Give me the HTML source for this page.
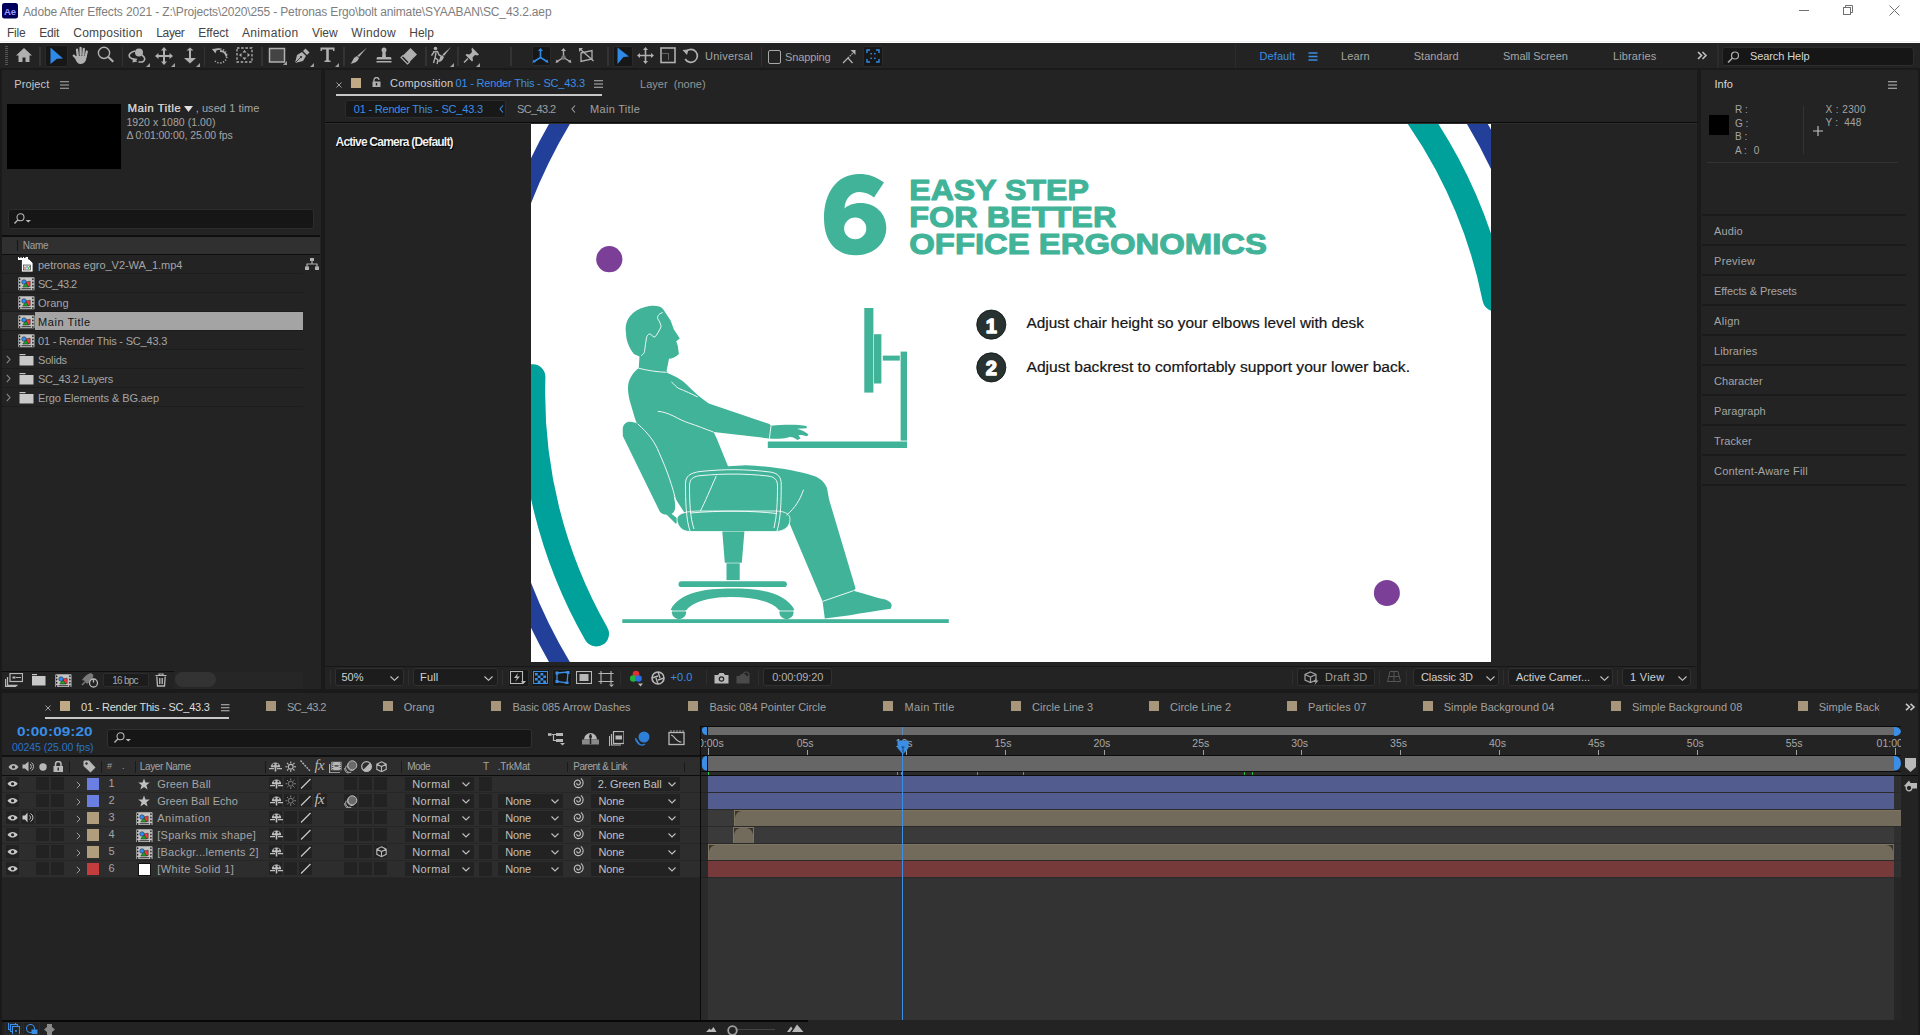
<!DOCTYPE html>
<html><head><meta charset="utf-8"><style>
html,body{margin:0;padding:0;width:1920px;height:1035px;overflow:hidden;background:#232323;}
body{position:relative;font-family:"Liberation Sans", sans-serif;}
div,span,svg{position:absolute;box-sizing:border-box;}
.t{white-space:pre;}
</style></head><body>
<div style="left:0px;top:0px;width:1920px;height:43px;background:#ffffff;"></div>
<div style="left:0px;top:41px;width:1920px;height:1px;background:#f0f0f0;"></div>
<svg style="position:absolute;left:2px;top:3px;" width="16" height="16" viewBox="0 0 16 16"><rect x="0" y="0" width="16" height="15.5" rx="2.5" fill="#00005b"/><text x="8" y="11.6" text-anchor="middle" font-family="Liberation Sans" font-weight="700" font-size="9.5" fill="#9999ff">Ae</text></svg>
<span class="t" style="left:23px;top:5.54px;font-size:12px;line-height:12px;color:#7e7e7e;font-weight:400;letter-spacing:-0.147px;">Adobe After Effects 2021 - Z:\Projects\2020\255 - Petronas Ergo\bolt animate\SYAABAN\SC_43.2.aep</span>
<span class="t" style="left:7px;top:26.54px;font-size:12px;line-height:12px;color:#444444;font-weight:400;letter-spacing:-0.246px;">File</span>
<span class="t" style="left:39.25px;top:26.54px;font-size:12px;line-height:12px;color:#444444;font-weight:400;letter-spacing:-0.193px;">Edit</span>
<span class="t" style="left:73.25px;top:26.54px;font-size:12px;line-height:12px;color:#444444;font-weight:400;letter-spacing:0.240px;">Composition</span>
<span class="t" style="left:156.25px;top:26.54px;font-size:12px;line-height:12px;color:#444444;font-weight:400;letter-spacing:-0.355px;">Layer</span>
<span class="t" style="left:198.25px;top:26.54px;font-size:12px;line-height:12px;color:#444444;font-weight:400;letter-spacing:-0.023px;">Effect</span>
<span class="t" style="left:242px;top:26.54px;font-size:12px;line-height:12px;color:#444444;font-weight:400;letter-spacing:0.342px;">Animation</span>
<span class="t" style="left:312px;top:26.54px;font-size:12px;line-height:12px;color:#444444;font-weight:400;letter-spacing:-0.065px;">View</span>
<span class="t" style="left:351.25px;top:26.54px;font-size:12px;line-height:12px;color:#444444;font-weight:400;letter-spacing:0.334px;">Window</span>
<span class="t" style="left:409.25px;top:26.54px;font-size:12px;line-height:12px;color:#444444;font-weight:400;letter-spacing:-0.027px;">Help</span>
<svg style="position:absolute;left:1795px;top:0px;" width="120" height="20" viewBox="0 0 120 20"><line x1="4" y1="10.5" x2="14" y2="10.5" stroke="#707070" stroke-width="1"/><rect x="48.5" y="7.5" width="7" height="7" fill="none" stroke="#707070"/><path d="M50.5 7.5 V5.5 H57.5 V12.5 H55.5" fill="none" stroke="#707070"/><path d="M94.5 5.5 L104.5 15.5 M104.5 5.5 L94.5 15.5" stroke="#707070" stroke-width="1"/></svg>
<div style="left:0px;top:43px;width:1920px;height:25px;background:#232323;"></div>
<div style="left:0px;top:68px;width:1920px;height:2px;background:#1a1a1a;"></div>
<svg style="position:absolute;left:5px;top:46px;" width="3" height="20" viewBox="0 0 3 20"><rect x="0" y="0" width="3" height="1" fill="#555"/><rect x="0" y="2" width="3" height="1" fill="#555"/><rect x="0" y="4" width="3" height="1" fill="#555"/><rect x="0" y="6" width="3" height="1" fill="#555"/><rect x="0" y="8" width="3" height="1" fill="#555"/><rect x="0" y="10" width="3" height="1" fill="#555"/><rect x="0" y="12" width="3" height="1" fill="#555"/><rect x="0" y="14" width="3" height="1" fill="#555"/><rect x="0" y="16" width="3" height="1" fill="#555"/><rect x="0" y="18" width="3" height="1" fill="#555"/></svg>
<svg style="position:absolute;left:15px;top:47px;" width="18" height="16" viewBox="0 0 18 16"><path d="M9 1 L17 8.5 H14.5 V15 H10.5 V10.5 H7.5 V15 H3.5 V8.5 H1 Z" fill="#b0b0b0"/></svg>
<div style="left:39px;top:47px;width:1.5px;height:19px;background:#333333;"></div>
<div style="left:44.5px;top:44.5px;width:23px;height:22px;background:#171717;border:1px solid #2a2a2a;border-radius:2px;"></div>
<svg style="position:absolute;left:50px;top:47px;" width="14" height="18" viewBox="0 0 14 18"><path d="M0.5 0.5 L13 11.5 L7 11.8 L0.5 17 Z" fill="#2e8ae6"/></svg>
<svg style="position:absolute;left:72px;top:46px;" width="18" height="19" viewBox="0 0 18 19"><g stroke="#b0b0b0" stroke-width="2.3" stroke-linecap="round" fill="none"><path d="M5.8 10 L5 3.6"/><path d="M8.6 9 L8.6 1.8"/><path d="M11.3 9 L11.8 2.8"/><path d="M13.6 10.5 L14.8 5.5"/><path d="M4.6 12.5 L1.8 9.6"/></g><path d="M4 10 H14.8 L14 14 C13 16.5 11 18 8.5 18 C6 18 4.5 16 3.5 13.5 Z" fill="#b0b0b0"/></svg>
<svg style="position:absolute;left:97px;top:46px;" width="18" height="18" viewBox="0 0 18 18"><circle cx="7" cy="6.9" r="5.6" fill="none" stroke="#b0b0b0" stroke-width="1.4"/><path d="M11 10.8 L16.3 15.8" stroke="#b0b0b0" stroke-width="2"/></svg>
<div style="left:121.5px;top:47px;width:1.5px;height:19px;background:#333333;"></div>
<svg style="position:absolute;left:128px;top:47px;" width="22" height="19" viewBox="0 0 22 19"><circle cx="11" cy="5.5" r="4" fill="#b0b0b0"/><path d="M7 4 C2 5 0 8 2 10.5 C4 13 8 12 9 12.5 M14 8 C17 10 18 13 14.5 15 L10.5 15" fill="none" stroke="#b0b0b0" stroke-width="1.6"/><path d="M5 11 L9.5 14.5 L4.5 15.5 Z" fill="#b0b0b0"/></svg>
<svg style="position:absolute;left:145.5px;top:62.5px;" width="4" height="4" viewBox="0 0 4 4"><path d="M4 0 V4 H0 Z" fill="#a0a0a0"/></svg>
<svg style="position:absolute;left:155px;top:47px;" width="18" height="18" viewBox="0 0 18 18"><path d="M9 0 L12 3.5 H10 V8 H14.5 V6 L18 9 L14.5 12 V10 H10 V14.5 H12 L9 18 L6 14.5 H8 V10 H3.5 V12 L0 9 L3.5 6 V8 H8 V3.5 H6 Z" fill="#b0b0b0"/></svg>
<svg style="position:absolute;left:171px;top:62.5px;" width="4" height="4" viewBox="0 0 4 4"><path d="M4 0 V4 H0 Z" fill="#a0a0a0"/></svg>
<svg style="position:absolute;left:182px;top:47px;" width="16" height="18" viewBox="0 0 16 18"><path d="M8 0.5 L11.5 3.5 H9 V11 H14 L8 16.5 L2 11 H7 V3.5 H4.5 Z" fill="#b0b0b0"/></svg>
<svg style="position:absolute;left:195.5px;top:62.5px;" width="4" height="4" viewBox="0 0 4 4"><path d="M4 0 V4 H0 Z" fill="#a0a0a0"/></svg>
<div style="left:203.5px;top:47px;width:1.5px;height:19px;background:#333333;"></div>
<svg style="position:absolute;left:211px;top:47px;" width="18" height="18" viewBox="0 0 18 18"><path d="M4 4 A7 7 0 1 1 4 14" fill="none" stroke="#b0b0b0" stroke-width="1.5" stroke-dasharray="1.2 1.6"/><path d="M9 4 A6.5 6.5 0 0 1 15.5 9.5" fill="none" stroke="#b0b0b0" stroke-width="1.8"/><path d="M1 2 L6 1.5 L4.5 6.5 Z" fill="#b0b0b0"/><path d="M3.3 3.5 A7 7 0 0 1 9 2.2" fill="none" stroke="#b0b0b0" stroke-width="1.8"/></svg>
<svg style="position:absolute;left:236px;top:47px;" width="18" height="18" viewBox="0 0 18 18"><rect x="1" y="1" width="15" height="14" fill="none" stroke="#b0b0b0" stroke-width="1.3" stroke-dasharray="2.5 1.7"/><path d="M8.5 3 L10.5 5.5 H6.5 Z M8.5 13 L10.5 10.5 H6.5 Z M3 8 L5.5 6 V10 Z M14 8 L11.5 6 V10 Z" fill="#b0b0b0"/></svg>
<div style="left:261px;top:47px;width:1.5px;height:19px;background:#333333;"></div>
<svg style="position:absolute;left:268px;top:47px;" width="20" height="19" viewBox="0 0 20 19"><rect x="1.5" y="1.5" width="15" height="13.5" fill="#444" stroke="#b0b0b0" stroke-width="1.5"/><path d="M19 14 V18 H15 Z" fill="#a0a0a0"/></svg>
<svg style="position:absolute;left:293px;top:47px;" width="18" height="18" viewBox="0 0 18 18"><path d="M2 16 L4 8 L9 5 L13 9 L10 14 Z" fill="#b0b0b0"/><path d="M10 4 L12.5 1.5 L16.5 5.5 L14 8 Z" fill="#b0b0b0"/><circle cx="8" cy="10" r="1.1" fill="#232323"/><path d="M2 16 L7.5 10.5" stroke="#232323" stroke-width="0.8"/></svg>
<svg style="position:absolute;left:310px;top:62.5px;" width="4" height="4" viewBox="0 0 4 4"><path d="M4 0 V4 H0 Z" fill="#a0a0a0"/></svg>
<svg style="position:absolute;left:320px;top:47px;" width="16" height="17" viewBox="0 0 16 17"><path d="M0.5 0.5 H14.5 V4 H13 V2.5 H8.8 V13.5 H10.5 V15 H4.5 V13.5 H6.2 V2.5 H2 V4 H0.5 Z" fill="#b0b0b0"/></svg>
<svg style="position:absolute;left:335px;top:62.5px;" width="4" height="4" viewBox="0 0 4 4"><path d="M4 0 V4 H0 Z" fill="#a0a0a0"/></svg>
<div style="left:343px;top:47px;width:1.5px;height:19px;background:#333333;"></div>
<svg style="position:absolute;left:350px;top:47px;" width="18" height="18" viewBox="0 0 18 18"><path d="M17 0.5 L9 10 L7.5 8.5 Z" fill="#b0b0b0"/><path d="M7 9 L9 11 C8 14 5 16.5 0.5 16.5 C2.5 15 3 12 4.5 10.5 Z" fill="#b0b0b0"/></svg>
<svg style="position:absolute;left:375px;top:47px;" width="18" height="18" viewBox="0 0 18 18"><circle cx="9" cy="3" r="2.5" fill="#b0b0b0"/><path d="M7.5 5 H10.5 L11 10 H15.5 C16.5 10 16.5 12.5 16.5 12.5 H1.5 C1.5 12.5 1.5 10 2.5 10 H7 Z" fill="#b0b0b0"/><rect x="1.5" y="14" width="15" height="1.5" fill="#b0b0b0"/></svg>
<svg style="position:absolute;left:400px;top:47px;" width="18" height="18" viewBox="0 0 18 18"><path d="M10.5 1 L17 7.5 L9.5 15 L3 8.5 Z" fill="#b0b0b0"/><path d="M3 8.5 L9.5 15 L7.5 17 L1 10.5 Z" fill="none" stroke="#b0b0b0" stroke-width="1.2"/></svg>
<div style="left:425px;top:47px;width:1.5px;height:19px;background:#333333;"></div>
<svg style="position:absolute;left:431px;top:46px;" width="21" height="20" viewBox="0 0 21 20"><circle cx="4.5" cy="2.5" r="1.8" fill="#b0b0b0"/><path d="M2 6 L6.5 5.5 L8 9 L10 10 M5 7 L4 12 L2.5 17 M4.5 12 L7 14 L6 18 M3 6 L0.5 9.5" fill="none" stroke="#b0b0b0" stroke-width="1.4"/><path d="M20 1 L13 10 L11.5 8.5 Z" fill="#b0b0b0"/><path d="M11 9 L13 11 C12 14 10 16 7 16 C8.5 14 9 12 9 11 Z" fill="#b0b0b0"/></svg>
<svg style="position:absolute;left:449.5px;top:62.5px;" width="4" height="4" viewBox="0 0 4 4"><path d="M4 0 V4 H0 Z" fill="#a0a0a0"/></svg>
<div style="left:457px;top:47px;width:1.5px;height:19px;background:#333333;"></div>
<svg style="position:absolute;left:463px;top:47px;" width="17" height="17" viewBox="0 0 17 17"><path d="M8 1 L15 8 L13.5 9 L11 8.5 L8.5 11 L9 14 L8 15 L1.5 8.5 L2.5 7.5 L5.5 8 L8 5.5 L7.5 3 Z" fill="#b0b0b0" transform="translate(1 -0.5)"/><path d="M5 11.5 L1 15.5" stroke="#b0b0b0" stroke-width="1.5"/></svg>
<svg style="position:absolute;left:476px;top:62.5px;" width="4" height="4" viewBox="0 0 4 4"><path d="M4 0 V4 H0 Z" fill="#a0a0a0"/></svg>
<div style="left:510px;top:47px;width:1.5px;height:19px;background:#333333;"></div>
<div style="left:531.5px;top:46px;width:19.5px;height:20px;background:#171717;border:1px solid #2a2a2a;border-radius:2px;"></div>
<svg style="position:absolute;left:532px;top:48px;" width="17" height="16" viewBox="0 0 17 16"><path d="M8.5 2 V9.5 L2 13.5 M8.5 9.5 L15 13.5" stroke="#2e8ae6" stroke-width="1.6" fill="none"/><path d="M8.5 0 L11 3 H6 Z M0.5 15 L1.5 11.5 L4 14 Z M16.5 15 L15.5 11.5 L13 14 Z" fill="#2e8ae6"/></svg>
<svg style="position:absolute;left:555px;top:48px;" width="17" height="16" viewBox="0 0 17 16"><path d="M8.5 2 V9.5 L2 13.5 M8.5 9.5 L15 13.5" stroke="#b0b0b0" stroke-width="1.4" fill="none"/><path d="M8.5 0 L11 3 H6 Z M0.5 15 L1.5 11.5 L4 14 Z M16.5 15 L15.5 11.5 L13 14 Z" fill="#b0b0b0"/><circle cx="8.5" cy="9.5" r="2.3" fill="#777"/></svg>
<svg style="position:absolute;left:579px;top:48px;" width="16" height="16" viewBox="0 0 16 16"><path d="M2 5 L13 2.5 V11 L2 13.5 Z" fill="none" stroke="#b0b0b0" stroke-width="1.3"/><path d="M1 1 L14.5 13" stroke="#b0b0b0" stroke-width="1.3"/><path d="M0 0 H4 L0 4 Z" fill="#b0b0b0"/></svg>
<div style="left:607px;top:47px;width:1.5px;height:19px;background:#333333;"></div>
<div style="left:612.5px;top:45.5px;width:20px;height:21px;background:#171717;border:1px solid #2a2a2a;border-radius:2px;"></div>
<svg style="position:absolute;left:617px;top:47px;" width="13" height="18" viewBox="0 0 13 18"><path d="M0.5 0.5 L12 9.5 L6.5 10 L0.5 17 Z" fill="#2e8ae6"/></svg>
<svg style="position:absolute;left:637px;top:47px;" width="17" height="17" viewBox="0 0 17 17"><path d="M8.5 0 L11 3 H9.3 V7.7 H14 V6 L17 8.5 L14 11 V9.3 H9.3 V14 H11 L8.5 17 L6 14 H7.7 V9.3 H3 V11 L0 8.5 L3 6 V7.7 H7.7 V3 H6 Z" fill="#b0b0b0"/></svg>
<svg style="position:absolute;left:660px;top:47px;" width="16" height="17" viewBox="0 0 16 17"><rect x="1" y="1" width="14" height="14.5" fill="none" stroke="#b0b0b0" stroke-width="1.6"/><path d="M2.5 6.5 H8.5 V13" fill="none" stroke="#b0b0b0" stroke-width="0.9" stroke-dasharray="1 1"/></svg>
<svg style="position:absolute;left:682px;top:47px;" width="18" height="18" viewBox="0 0 18 18"><path d="M4 4.5 A6.5 6.5 0 1 1 3.2 12" fill="none" stroke="#b0b0b0" stroke-width="1.7"/><path d="M0.5 3 L6.5 2.5 L5 8 Z" fill="#b0b0b0"/></svg>
<span class="t" style="left:705px;top:51.29px;font-size:11px;line-height:11px;color:#a5a5a5;font-weight:400;letter-spacing:0.219px;">Universal</span>
<div style="left:760.5px;top:47px;width:1.5px;height:19px;background:#333333;"></div>
<div style="left:768px;top:50px;width:13px;height:14px;background:transparent;border:1.6px solid #a8a8a8;border-radius:2px;"></div>
<span class="t" style="left:785px;top:51.69px;font-size:11px;line-height:11px;color:#a5a5a5;font-weight:400;letter-spacing:-0.127px;">Snapping</span>
<svg style="position:absolute;left:842px;top:49px;" width="14" height="15" viewBox="0 0 14 15"><path d="M1 14 L6 9 L10.5 14" fill="none" stroke="#b0b0b0" stroke-width="1.3"/><path d="M6 9 L12 3" stroke="#b0b0b0" stroke-width="1.2" stroke-dasharray="1.5 1"/><path d="M13.5 1 V6 L8.5 1 Z" fill="#b0b0b0"/></svg>
<div style="left:862.5px;top:45.5px;width:20.5px;height:21.5px;background:#171717;border:1px solid #2a2a2a;border-radius:2px;"></div>
<svg style="position:absolute;left:866px;top:49px;" width="14" height="14" viewBox="0 0 14 14"><path d="M1 4 V1 H4 M10 1 H13 V4 M13 10 V13 H10 M4 13 H1 V10" fill="none" stroke="#2e8ae6" stroke-width="1.4"/><path d="M5 5.5 V4.5 H6 M8 4.5 H9 V5.5 M9 8.5 V9.5 H8 M6 9.5 H5 V8.5" fill="none" stroke="#2e8ae6" stroke-width="1.2"/></svg>
<div style="left:1235px;top:44px;width:1px;height:24px;background:#2c2c2c;"></div>
<span class="t" style="left:1259.4px;top:51.29px;font-size:11px;line-height:11px;color:#3a8ee6;font-weight:400;letter-spacing:0.124px;">Default</span>
<svg style="position:absolute;left:1308px;top:52px;" width="10" height="9" viewBox="0 0 10 9"><path d="M0.5 1 H9.5 M0.5 4.5 H9.5 M0.5 8 H9.5" stroke="#3a8ee6" stroke-width="1.3"/></svg>
<span class="t" style="left:1341px;top:51.29px;font-size:11px;line-height:11px;color:#a5a5a5;font-weight:400;letter-spacing:0.116px;">Learn</span>
<span class="t" style="left:1413.75px;top:51.29px;font-size:11px;line-height:11px;color:#a5a5a5;font-weight:400;letter-spacing:0.029px;">Standard</span>
<span class="t" style="left:1503px;top:51.29px;font-size:11px;line-height:11px;color:#a5a5a5;font-weight:400;letter-spacing:-0.052px;">Small Screen</span>
<span class="t" style="left:1613px;top:51.29px;font-size:11px;line-height:11px;color:#a5a5a5;font-weight:400;letter-spacing:0.127px;">Libraries</span>
<svg style="position:absolute;left:1697px;top:51px;" width="11" height="9" viewBox="0 0 11 9"><path d="M1 1 L4.5 4.5 L1 8 M5.5 1 L9 4.5 L5.5 8" fill="none" stroke="#c0c0c0" stroke-width="1.6"/></svg>
<div style="left:1717px;top:44px;width:1.5px;height:24px;background:#2c2c2c;"></div>
<div style="left:1722px;top:47px;width:192px;height:18.5px;background:#161616;border:1px solid #2c2c2c;border-radius:3px;"></div>
<svg style="position:absolute;left:1727px;top:51px;" width="13" height="12" viewBox="0 0 13 12"><circle cx="8" cy="4.5" r="3.5" fill="none" stroke="#b0b0b0" stroke-width="1.2"/><path d="M5.5 7 L1 11.5" stroke="#b0b0b0" stroke-width="1.5"/></svg>
<span class="t" style="left:1750px;top:51.39px;font-size:11px;line-height:11px;color:#d6d6d6;font-weight:400;letter-spacing:-0.093px;">Search Help</span>
<div style="left:0px;top:70px;width:1920px;height:623px;background:#1a1a1a;"></div>
<div style="left:2px;top:70px;width:319px;height:619px;background:#232323;"></div>
<div style="left:325px;top:70px;width:1372px;height:619px;background:#232323;"></div>
<div style="left:1701px;top:70px;width:217px;height:619px;background:#232323;"></div>
<div style="left:0px;top:693px;width:1920px;height:342px;background:#1a1a1a;"></div>
<div style="left:2px;top:693px;width:1916px;height:342px;background:#232323;"></div>
<span class="t" style="left:14.3px;top:78.59px;font-size:11px;line-height:11px;color:#c8c8c8;font-weight:400;letter-spacing:0.127px;">Project</span>
<svg style="position:absolute;left:60px;top:81px;" width="9" height="8" viewBox="0 0 9 8"><path d="M0 0.75 H9 M0 4 H9 M0 7.25 H9" stroke="#b0b0b0" stroke-width="1.2"/></svg>
<div style="left:7px;top:104px;width:114px;height:65px;background:#000000;"></div>
<span class="t" style="left:127.5px;top:103.03px;font-size:11.3px;line-height:11.3px;color:#cdcdcd;font-weight:400;text-shadow:0.3px 0 0 #cdcdcd;letter-spacing:0.527px;">Main Title</span>
<svg style="position:absolute;left:184px;top:106px;" width="9" height="6" viewBox="0 0 9 6"><path d="M0 0 H9 L4.5 6 Z" fill="#e0e0e0"/></svg>
<span class="t" style="left:195.7px;top:103.29px;font-size:11px;line-height:11px;color:#a5a5a5;font-weight:400;letter-spacing:0.060px;">, used 1 time</span>
<span class="t" style="left:126.4px;top:116.81px;font-size:10.5px;line-height:10.5px;color:#a5a5a5;font-weight:400;letter-spacing:0.050px;">1920 x 1080 (1.00)</span>
<span class="t" style="left:126.4px;top:129.81px;font-size:10.5px;line-height:10.5px;color:#a5a5a5;font-weight:400;letter-spacing:-0.073px;">Δ 0:01:00:00, 25.00 fps</span>
<div style="left:7.7px;top:209.3px;width:306.5px;height:19.5px;background:#161616;border:1px solid #2c2c2c;border-radius:3px;"></div>
<svg style="position:absolute;left:14px;top:213px;" width="18" height="12" viewBox="0 0 18 12"><circle cx="6.5" cy="4.3" r="3.5" fill="none" stroke="#b8b8b8" stroke-width="1.1"/><path d="M4 6.8 L0.5 10.5" stroke="#b8b8b8" stroke-width="1.3"/><path d="M11.5 7 H17 L14.25 9.5 Z" fill="#b8b8b8"/></svg>
<div style="left:2px;top:235px;width:318px;height:1.5px;background:#0e0e0e;"></div>
<div style="left:2px;top:236.5px;width:318px;height:17.5px;background:#303030;"></div>
<div style="left:17px;top:240px;width:1px;height:11px;background:#151515;"></div>
<span class="t" style="left:22.8px;top:240.53px;font-size:10px;line-height:10px;color:#a0a0a0;font-weight:400;letter-spacing:-0.292px;">Name</span>
<div style="left:2px;top:254px;width:318px;height:1.2px;background:#0e0e0e;"></div>
<div style="left:2px;top:273px;width:301px;height:1px;background:#1c1c1c;"></div>
<svg style="position:absolute;left:18px;top:256px;" width="17" height="17" viewBox="0 0 17 17"><path d="M3.5 3 H11 L15 7 V16 H3.5 Z" fill="#ffffff" stroke="#222" stroke-width="0.8"/><rect x="0" y="1" width="10" height="3" fill="#fff"/><path d="M1 1.5 h1.5 M3.5 1.5 h1.5 M6 1.5 h1.5" stroke="#222" stroke-width="1"/><rect x="5.5" y="9" width="7" height="5" fill="#ddd" stroke="#222" stroke-width="0.6"/><circle cx="7" cy="12" r="0.8" fill="#e03030"/><circle cx="9" cy="11" r="0.8" fill="#2b7de0"/><path d="M10 13 L12 10" stroke="#24b43c"/></svg>
<span class="t" style="left:38px;top:259.69px;font-size:11px;line-height:11px;color:#a5a5a5;font-weight:400;letter-spacing:-0.030px;">petronas egro_V2-WA_1.mp4</span>
<div style="left:2px;top:292px;width:301px;height:1px;background:#1c1c1c;"></div>
<svg style="position:absolute;left:17.5px;top:277px;" width="17" height="13.5" viewBox="0 0 17 13.5"><rect x="0.3" y="0.3" width="16.2" height="13" rx="0.8" fill="#c4c4c4"/><ellipse cx="1.7" cy="2.2" rx="0.7" ry="1" fill="#111"/><ellipse cx="14.9" cy="2.2" rx="0.7" ry="1" fill="#111"/><ellipse cx="1.7" cy="5.5" rx="0.7" ry="1" fill="#111"/><ellipse cx="14.9" cy="5.5" rx="0.7" ry="1" fill="#111"/><ellipse cx="1.7" cy="8.8" rx="0.7" ry="1" fill="#111"/><ellipse cx="14.9" cy="8.8" rx="0.7" ry="1" fill="#111"/><ellipse cx="1.7" cy="12.099999999999998" rx="0.7" ry="1" fill="#111"/><ellipse cx="14.9" cy="12.099999999999998" rx="0.7" ry="1" fill="#111"/><rect x="3.5" y="11.3" width="9.6" height="0.9" fill="#222"/><path d="M7.5 5 L12.2 4.2 L12.2 9.5 L9 9.5 Z" fill="#f03a3a" stroke="#222" stroke-width="0.5"/><path d="M4.8 10 L7.8 5.8 L10.8 10 Z" fill="#16a820" stroke="#222" stroke-width="0.5"/><circle cx="6" cy="5" r="2.3" fill="#2f8cf0" stroke="#222" stroke-width="0.5"/></svg>
<span class="t" style="left:38px;top:278.69px;font-size:11px;line-height:11px;color:#a5a5a5;font-weight:400;letter-spacing:-0.601px;">SC_43.2</span>
<div style="left:2px;top:311px;width:301px;height:1px;background:#1c1c1c;"></div>
<svg style="position:absolute;left:17.5px;top:296px;" width="17" height="13.5" viewBox="0 0 17 13.5"><rect x="0.3" y="0.3" width="16.2" height="13" rx="0.8" fill="#c4c4c4"/><ellipse cx="1.7" cy="2.2" rx="0.7" ry="1" fill="#111"/><ellipse cx="14.9" cy="2.2" rx="0.7" ry="1" fill="#111"/><ellipse cx="1.7" cy="5.5" rx="0.7" ry="1" fill="#111"/><ellipse cx="14.9" cy="5.5" rx="0.7" ry="1" fill="#111"/><ellipse cx="1.7" cy="8.8" rx="0.7" ry="1" fill="#111"/><ellipse cx="14.9" cy="8.8" rx="0.7" ry="1" fill="#111"/><ellipse cx="1.7" cy="12.099999999999998" rx="0.7" ry="1" fill="#111"/><ellipse cx="14.9" cy="12.099999999999998" rx="0.7" ry="1" fill="#111"/><rect x="3.5" y="11.3" width="9.6" height="0.9" fill="#222"/><path d="M7.5 5 L12.2 4.2 L12.2 9.5 L9 9.5 Z" fill="#f03a3a" stroke="#222" stroke-width="0.5"/><path d="M4.8 10 L7.8 5.8 L10.8 10 Z" fill="#16a820" stroke="#222" stroke-width="0.5"/><circle cx="6" cy="5" r="2.3" fill="#2f8cf0" stroke="#222" stroke-width="0.5"/></svg>
<span class="t" style="left:38px;top:297.69px;font-size:11px;line-height:11px;color:#a5a5a5;font-weight:400;letter-spacing:-0.018px;">Orang</span>
<div style="left:2px;top:330px;width:301px;height:1px;background:#1c1c1c;"></div>
<div style="left:2px;top:312px;width:33px;height:18px;background:#2b2b2b;"></div>
<div style="left:35px;top:312px;width:268px;height:18px;background:#a4a4a4;"></div>
<svg style="position:absolute;left:17.5px;top:315px;" width="17" height="13.5" viewBox="0 0 17 13.5"><rect x="0.3" y="0.3" width="16.2" height="13" rx="0.8" fill="#c4c4c4"/><ellipse cx="1.7" cy="2.2" rx="0.7" ry="1" fill="#111"/><ellipse cx="14.9" cy="2.2" rx="0.7" ry="1" fill="#111"/><ellipse cx="1.7" cy="5.5" rx="0.7" ry="1" fill="#111"/><ellipse cx="14.9" cy="5.5" rx="0.7" ry="1" fill="#111"/><ellipse cx="1.7" cy="8.8" rx="0.7" ry="1" fill="#111"/><ellipse cx="14.9" cy="8.8" rx="0.7" ry="1" fill="#111"/><ellipse cx="1.7" cy="12.099999999999998" rx="0.7" ry="1" fill="#111"/><ellipse cx="14.9" cy="12.099999999999998" rx="0.7" ry="1" fill="#111"/><rect x="3.5" y="11.3" width="9.6" height="0.9" fill="#222"/><path d="M7.5 5 L12.2 4.2 L12.2 9.5 L9 9.5 Z" fill="#f03a3a" stroke="#222" stroke-width="0.5"/><path d="M4.8 10 L7.8 5.8 L10.8 10 Z" fill="#16a820" stroke="#222" stroke-width="0.5"/><circle cx="6" cy="5" r="2.3" fill="#2f8cf0" stroke="#222" stroke-width="0.5"/></svg>
<span class="t" style="left:38px;top:316.69px;font-size:11px;line-height:11px;color:#141414;font-weight:400;letter-spacing:0.570px;">Main Title</span>
<div style="left:2px;top:349px;width:301px;height:1px;background:#1c1c1c;"></div>
<svg style="position:absolute;left:17.5px;top:334px;" width="17" height="13.5" viewBox="0 0 17 13.5"><rect x="0.3" y="0.3" width="16.2" height="13" rx="0.8" fill="#c4c4c4"/><ellipse cx="1.7" cy="2.2" rx="0.7" ry="1" fill="#111"/><ellipse cx="14.9" cy="2.2" rx="0.7" ry="1" fill="#111"/><ellipse cx="1.7" cy="5.5" rx="0.7" ry="1" fill="#111"/><ellipse cx="14.9" cy="5.5" rx="0.7" ry="1" fill="#111"/><ellipse cx="1.7" cy="8.8" rx="0.7" ry="1" fill="#111"/><ellipse cx="14.9" cy="8.8" rx="0.7" ry="1" fill="#111"/><ellipse cx="1.7" cy="12.099999999999998" rx="0.7" ry="1" fill="#111"/><ellipse cx="14.9" cy="12.099999999999998" rx="0.7" ry="1" fill="#111"/><rect x="3.5" y="11.3" width="9.6" height="0.9" fill="#222"/><path d="M7.5 5 L12.2 4.2 L12.2 9.5 L9 9.5 Z" fill="#f03a3a" stroke="#222" stroke-width="0.5"/><path d="M4.8 10 L7.8 5.8 L10.8 10 Z" fill="#16a820" stroke="#222" stroke-width="0.5"/><circle cx="6" cy="5" r="2.3" fill="#2f8cf0" stroke="#222" stroke-width="0.5"/></svg>
<span class="t" style="left:38px;top:335.69px;font-size:11px;line-height:11px;color:#a5a5a5;font-weight:400;letter-spacing:-0.201px;">01 - Render This - SC_43.3</span>
<div style="left:2px;top:368px;width:301px;height:1px;background:#1c1c1c;"></div>
<svg style="position:absolute;left:18.5px;top:353.5px;" width="15" height="12" viewBox="0 0 15 12"><rect x="0.5" y="0" width="6" height="1.2" fill="#c8c8c8"/><rect x="0.5" y="2" width="14" height="9.5" fill="#c8c8c8"/></svg>
<svg style="position:absolute;left:6px;top:355px;" width="5" height="9" viewBox="0 0 5 9"><path d="M0.8 0.8 L4 4.5 L0.8 8.2" fill="none" stroke="#8a8a8a" stroke-width="1.1"/></svg>
<span class="t" style="left:38px;top:354.69px;font-size:11px;line-height:11px;color:#a5a5a5;font-weight:400;letter-spacing:-0.172px;">Solids</span>
<div style="left:2px;top:387px;width:301px;height:1px;background:#1c1c1c;"></div>
<svg style="position:absolute;left:18.5px;top:372.5px;" width="15" height="12" viewBox="0 0 15 12"><rect x="0.5" y="0" width="6" height="1.2" fill="#c8c8c8"/><rect x="0.5" y="2" width="14" height="9.5" fill="#c8c8c8"/></svg>
<svg style="position:absolute;left:6px;top:374px;" width="5" height="9" viewBox="0 0 5 9"><path d="M0.8 0.8 L4 4.5 L0.8 8.2" fill="none" stroke="#8a8a8a" stroke-width="1.1"/></svg>
<span class="t" style="left:38px;top:373.69px;font-size:11px;line-height:11px;color:#a5a5a5;font-weight:400;letter-spacing:-0.283px;">SC_43.2 Layers</span>
<div style="left:2px;top:406px;width:301px;height:1px;background:#1c1c1c;"></div>
<svg style="position:absolute;left:18.5px;top:391.5px;" width="15" height="12" viewBox="0 0 15 12"><rect x="0.5" y="0" width="6" height="1.2" fill="#c8c8c8"/><rect x="0.5" y="2" width="14" height="9.5" fill="#c8c8c8"/></svg>
<svg style="position:absolute;left:6px;top:393px;" width="5" height="9" viewBox="0 0 5 9"><path d="M0.8 0.8 L4 4.5 L0.8 8.2" fill="none" stroke="#8a8a8a" stroke-width="1.1"/></svg>
<span class="t" style="left:38px;top:392.69px;font-size:11px;line-height:11px;color:#a5a5a5;font-weight:400;letter-spacing:-0.090px;">Ergo Elements &amp; BG.aep</span>
<svg style="position:absolute;left:304.5px;top:258px;" width="14" height="12" viewBox="0 0 14 12"><rect x="5" y="0" width="4" height="3" fill="#b0b0b0"/><path d="M7 3 V6 M2 9 V6 H12 V9" fill="none" stroke="#b0b0b0" stroke-width="1.2"/><rect x="0" y="8.5" width="4" height="3.5" fill="#b0b0b0"/><rect x="10" y="8.5" width="4" height="3.5" fill="#b0b0b0"/></svg>
<div style="left:174px;top:672px;width:129px;height:17px;background:#262626;"></div>
<div style="left:2px;top:670.6px;width:172px;height:1.4px;background:#0e0e0e;"></div>
<svg style="position:absolute;left:4.5px;top:673px;" width="18" height="14" viewBox="0 0 18 14"><rect x="5" y="0.5" width="12.5" height="8" fill="none" stroke="#b8b8b8" stroke-width="1.2"/><rect x="7.5" y="3.5" width="3" height="2" fill="#b8b8b8"/><rect x="11" y="4" width="5" height="1" fill="#b8b8b8"/><path d="M2.5 4 V12.5 H12.5 M0.5 6 V13.5 H11" fill="none" stroke="#b8b8b8" stroke-width="1.3"/></svg>
<svg style="position:absolute;left:31.5px;top:674px;" width="14" height="12" viewBox="0 0 14 12"><rect x="0" y="0" width="5" height="1.2" fill="#c8c8c8"/><rect x="0" y="2" width="13.5" height="9.5" fill="#c8c8c8"/></svg>
<svg style="position:absolute;left:54.8px;top:673.5px;" width="17" height="13.5" viewBox="0 0 17 13.5"><rect x="0.3" y="0.3" width="16.2" height="13" rx="0.8" fill="#c4c4c4"/><ellipse cx="1.7" cy="2.2" rx="0.7" ry="1" fill="#111"/><ellipse cx="14.9" cy="2.2" rx="0.7" ry="1" fill="#111"/><ellipse cx="1.7" cy="5.5" rx="0.7" ry="1" fill="#111"/><ellipse cx="14.9" cy="5.5" rx="0.7" ry="1" fill="#111"/><ellipse cx="1.7" cy="8.8" rx="0.7" ry="1" fill="#111"/><ellipse cx="14.9" cy="8.8" rx="0.7" ry="1" fill="#111"/><ellipse cx="1.7" cy="12.099999999999998" rx="0.7" ry="1" fill="#111"/><ellipse cx="14.9" cy="12.099999999999998" rx="0.7" ry="1" fill="#111"/><rect x="3.5" y="11.3" width="9.6" height="0.9" fill="#222"/><path d="M7.5 5 L12.2 4.2 L12.2 9.5 L9 9.5 Z" fill="#f03a3a" stroke="#222" stroke-width="0.5"/><path d="M4.8 10 L7.8 5.8 L10.8 10 Z" fill="#16a820" stroke="#222" stroke-width="0.5"/><circle cx="6" cy="5" r="2.3" fill="#2f8cf0" stroke="#222" stroke-width="0.5"/></svg>
<svg style="position:absolute;left:80.8px;top:673px;" width="18" height="15" viewBox="0 0 18 15"><path d="M10 0 C6 1 3 4 1 7 L4 8 L6 11 C9 9 12 6 12.5 2 Z" fill="#7a7a7a"/><path d="M1 12 L5 8" stroke="#7a7a7a" stroke-width="1.5"/><circle cx="12.5" cy="10" r="4" fill="none" stroke="#b8b8b8" stroke-width="1.3"/><path d="M12.5 5.5 V9.5" stroke="#b8b8b8" stroke-width="1.4"/></svg>
<div style="left:103px;top:672.7px;width:45.5px;height:14.5px;background:#1c1c1c;border:1px solid #2c2c2c;border-radius:2px;"></div>
<span class="t" style="left:112.3px;top:675.83px;font-size:10px;line-height:10px;color:#a5a5a5;font-weight:400;letter-spacing:-0.745px;">16 bpc</span>
<svg style="position:absolute;left:154.5px;top:673px;" width="12" height="14" viewBox="0 0 12 14"><path d="M0.5 2.5 H11.5 M4 2.5 V1 H8 V2.5" fill="none" stroke="#b8b8b8" stroke-width="1.2"/><path d="M1.8 3.5 L2.5 13 H9.5 L10.2 3.5" fill="none" stroke="#b8b8b8" stroke-width="1.3"/><path d="M4.5 5 V11 M6 5 V11 M7.5 5 V11" stroke="#b8b8b8" stroke-width="0.9"/></svg>
<div style="left:174.7px;top:671.8px;width:41.3px;height:15.2px;background:#333333;border-radius:8px;"></div>
<svg style="position:absolute;left:335.5px;top:81.5px;" width="6" height="6" viewBox="0 0 6 6"><path d="M0.5 0.5 L5.5 5.5 M5.5 0.5 L0.5 5.5" stroke="#a0a0a0" stroke-width="1"/></svg>
<div style="left:350.8px;top:78px;width:10.2px;height:10px;background:#c0aa85;"></div>
<svg style="position:absolute;left:371.5px;top:77px;" width="9" height="10" viewBox="0 0 9 10"><path d="M2 5 V3 A2.5 2.5 0 0 1 7 3" fill="none" stroke="#b0b0b0" stroke-width="1.3"/><rect x="0.5" y="4.5" width="8" height="5.5" fill="#b0b0b0"/><rect x="3.8" y="6" width="1.4" height="2.5" fill="#232323"/></svg>
<span class="t" style="left:390px;top:78.19px;font-size:11px;line-height:11px;color:#d0d0d0;font-weight:400;letter-spacing:0.196px;">Composition</span>
<span class="t" style="left:455.5px;top:78.19px;font-size:11px;line-height:11px;color:#3a8ee6;font-weight:400;letter-spacing:-0.189px;">01 - Render This - SC_43.3</span>
<svg style="position:absolute;left:593.5px;top:80px;" width="9" height="8" viewBox="0 0 9 8"><path d="M0 0.75 H9 M0 4 H9 M0 7.25 H9" stroke="#b8b8b8" stroke-width="1.2"/></svg>
<div style="left:335.8px;top:94px;width:266.5px;height:2.2px;background:#c8c8c8;"></div>
<span class="t" style="left:640px;top:78.69px;font-size:11px;line-height:11px;color:#959595;font-weight:400;letter-spacing:0.014px;">Layer  (none)</span>
<div style="left:345px;top:100.4px;width:161.3px;height:17.2px;background:#181818;border:1px solid #2c2c2c;border-radius:3px;"></div>
<span class="t" style="left:353.75px;top:103.69px;font-size:11px;line-height:11px;color:#3a8ee6;font-weight:400;letter-spacing:-0.201px;">01 - Render This - SC_43.3</span>
<svg style="position:absolute;left:499px;top:104.5px;" width="5" height="8" viewBox="0 0 5 8"><path d="M4 0.5 L1 4 L4 7.5" fill="none" stroke="#3a8ee6" stroke-width="1.1"/></svg>
<span class="t" style="left:517px;top:103.69px;font-size:11px;line-height:11px;color:#a0a0a0;font-weight:400;letter-spacing:-0.601px;">SC_43.2</span>
<svg style="position:absolute;left:571px;top:104.5px;" width="5" height="8" viewBox="0 0 5 8"><path d="M4 0.5 L1 4 L4 7.5" fill="none" stroke="#a0a0a0" stroke-width="1.1"/></svg>
<span class="t" style="left:590px;top:103.69px;font-size:11px;line-height:11px;color:#a0a0a0;font-weight:400;letter-spacing:0.308px;">Main Title</span>
<div style="left:325px;top:121.7px;width:1372px;height:1.6px;background:#0a0a0a;"></div>
<div style="left:325px;top:123.3px;width:1372px;height:0.8px;background:#2e2e2e;"></div>
<span class="t" style="left:335.5px;top:136.24px;font-size:12px;line-height:12px;color:#f0f0f0;font-weight:700;text-shadow:1px 1px 0 #000,-0.5px -0.5px 0 #000;letter-spacing:-0.785px;">Active Camera (Default)</span>
<div style="left:531px;top:124px;width:960px;height:538px;background:#ffffff;overflow:hidden;"></div>
<svg style="position:absolute;left:531px;top:124px;" width="960" height="538" viewBox="531 124 960 538"><path d="M582.61 698.14 A532 532 0 0 1 582.61 87.86" fill="none" stroke="#22409a" stroke-width="18"/><path d="M1425.94 51.04 A532 532 0 0 1 1542.32 300.62" fill="none" stroke="#22409a" stroke-width="18"/><path d="M596.25 633.79 A486 486 0 0 1 532.67 376.89" fill="none" stroke="#00a19a" stroke-width="25.5" stroke-linecap="round"/><path d="M1362.05 49.35 A486 486 0 0 1 1495.14 298.60" fill="none" stroke="#00a19a" stroke-width="25.5" stroke-linecap="round"/><circle cx="609.3" cy="259.2" r="13.1" fill="#7b3f98"/><circle cx="1386.9" cy="593" r="13" fill="#7b3f98"/><path fill-rule="evenodd" fill="#41b398" d="M884 182.5 C876 176.5 868 174 859.5 174 C836 174 824 194 824 218 C824 243 837 255.2 856 255.2 C874 255.2 886.3 243 886.3 228 C886.3 213 875 203 860.4 203 C853 203 848 205.5 844.5 208.4 C845 199 851 192.1 859.5 192.1 C865 192.1 870 194.5 874 197.5 Z M855.2 217.5 A11.1 10.9 0 1 0 855.2 239.3 A11.1 10.9 0 1 0 855.2 217.5 Z"/><text x="909.3" y="200.4" font-family="Liberation Sans" font-weight="700" font-size="29" fill="#41b398" stroke="#41b398" stroke-width="1.05" stroke-linejoin="round" textLength="179.5" lengthAdjust="spacingAndGlyphs">EASY STEP</text><text x="909.3" y="227.4" font-family="Liberation Sans" font-weight="700" font-size="29" fill="#41b398" stroke="#41b398" stroke-width="1.05" stroke-linejoin="round" textLength="207" lengthAdjust="spacingAndGlyphs">FOR BETTER</text><text x="909.3" y="254" font-family="Liberation Sans" font-weight="700" font-size="29" fill="#41b398" stroke="#41b398" stroke-width="1.05" stroke-linejoin="round" textLength="357.6" lengthAdjust="spacingAndGlyphs">OFFICE ERGONOMICS</text><circle cx="991.3" cy="324.6" r="14.6" fill="#283230" stroke="#0e1412" stroke-width="0.8"/><text x="991.3" y="332.6" text-anchor="middle" font-family="Liberation Sans" font-weight="700" font-size="20" fill="#ffffff" stroke="#ffffff" stroke-width="1.4" stroke-linejoin="round">1</text><circle cx="991.3" cy="367.4" r="14.6" fill="#283230" stroke="#0e1412" stroke-width="0.8"/><text x="991.3" y="375.4" text-anchor="middle" font-family="Liberation Sans" font-weight="700" font-size="20" fill="#ffffff" stroke="#ffffff" stroke-width="1.4" stroke-linejoin="round">2</text><text x="1026.5" y="328.4" font-family="Liberation Sans" font-size="14" fill="#151515" stroke="#151515" stroke-width="0.2" textLength="337.5" lengthAdjust="spacingAndGlyphs">Adjust chair height so your elbows level with desk</text><text x="1026.5" y="372.4" font-family="Liberation Sans" font-size="14" fill="#151515" stroke="#151515" stroke-width="0.2" textLength="383.5" lengthAdjust="spacingAndGlyphs">Adjust backrest to comfortably support your lower back.</text><g fill="#41b398"><rect x="864.3" y="308" width="9.1" height="84.6"/><rect x="874" y="334.2" width="7.4" height="49.3"/><rect x="882.8" y="355.6" width="17" height="5"/><rect x="900.6" y="351.6" width="6.4" height="89"/><rect x="767.8" y="441.5" width="139.2" height="6.5"/><rect x="622.3" y="619.2" width="326.5" height="3.8"/></g><path fill="#41b398" d="M622.8 431.3 C622 424 627 421 632 422 C636 422.5 638 423.5 639 425 C652 440 668 470 674 497 C676 507 676 513 670 514.5 C665 515.5 662 514 660 512 L622.8 436 Z"/><path fill="#41b398" d="M664 512 L668 511 L678 519 L676 524 Z"/><path fill="#41b398" d="M626 333 C624 322 630 311 645 307 C652 305 660 305 663 309 L670.6 320.5 L673.8 329.3 L679.8 338.4 L676.2 341.2 L677.8 346 L678.9 354 C676 357 672 358.8 669 358.8 L666.6 370.7 L667.4 373 C677 377 684 381 688 386 C695 393 702 399 708.8 403.4 L769.4 424.1 L771 425.7 C785 424.5 798 424.5 806.5 426 L806.8 428.2 L797 428.8 C801 430 806 432 808.5 434.5 L807 436.2 C803 435.2 800.5 434.8 798.5 435.2 L800.5 438.6 L797.5 440 C794 437.5 791.5 436.5 789 437.2 C783 439 776 439 769.4 438.5 L713.6 432 L716.3 437.6 L728 466.3 L746 465.3 C770 466 800 471 814 476 C820 478 824.8 482.3 827 488 L829 499.3 L855.6 588.6 L853.5 590.7 C865 594 878 598 884.3 599.2 C889 600.5 891.7 603 891.7 605.6 L890.7 608.8 C877 611 862 613 850 615.2 L824.8 618.4 L822.6 601.4 L786.5 516.3 L700 520 L684 512 C660 475 640 440 631 405 C628 395 627 387 629 381 C632 374 636 370 638.7 368.3 L639.5 356.4 C636 355 634 354 634 354 C629 348 626 340 626 333 Z"/><path fill="#41b398" stroke="#ffffff" stroke-width="0.8" d="M677 519 C677 513 688 511 700 511 L775 511 C785 511 790 514 790 519.5 C790 526 785 531.5 775 531.5 L690 531.5 C682 531.5 677 526 677 519 Z"/><g fill="none" stroke="#ffffff" stroke-width="0.9"><path d="M690 531 C686 520 685.5 500 685.5 484 C685.5 476 690 473 700 471.5 C725 469 745 469 770 472 C778 473 781.2 477 781.2 484 C781.2 500 781 518 777 531"/><path d="M694 529 C690 518 689.5 500 689.5 486 C689.5 479 693 476 702 475.5 C725 473.5 745 473.5 768 476 C775 477 777.5 480 777.5 486 C777.5 500 777 516 774 528"/><path d="M690 513 C720 510.5 750 510.5 777 513.5"/><path d="M716.3 475.9 C710 490 705 502 700.4 511"/><path d="M803.5 489.7 C800 500 795 508 786.5 515.2"/><path d="M662.6 312.5 C658 314 657 317 657.8 318.9 C660 322 661 325 661 326.9 C659 331 657 335 654.6 337.2 C652 336 651 334 649.9 334 C648 334 647 336 646.7 337.2 C645 345 645 350 644.3 352.4 C643 354.5 642 355 641.1 355.6"/><path d="M638.7 368.3 C648 370.5 657 372 666.6 372.3"/><path d="M671.4 381.9 C674 384 676 387 678.5 388.3 C685 391 692 394 697.7 397"/><path d="M657.8 411.4 C663 411.5 668 413.5 673.8 416.2 C679 419 684 421.5 689.7 423.3 C698 426 705 429 713.6 432.1"/><path d="M771 425.7 L769.4 438.5"/><path d="M637.6 423.8 C648 433 655 442 659 452.5 C667 470 673 488 676 501.4"/><path d="M822.6 601.4 L853.5 590.7"/></g><g fill="#41b398"><path d="M722.3 531.6 L744.4 531.6 L741.8 562.7 L724.8 562.7 Z"/><rect x="726.5" y="563.3" width="13.2" height="16.8"/><rect x="678.5" y="581.2" width="108.4" height="5.9" rx="3"/><path d="M670.6 609.9 C680 592 705 588.6 732.3 588.6 C760 588.6 785 592 794.6 609.9 L779 609.9 C770 600 750 597 732 597 C714 597 695 600 686.5 609.9 Z"/><circle cx="679" cy="612" r="7.2"/><circle cx="786.5" cy="612" r="7.2"/></g><path d="M671 611 H687 M778.5 611 H794.5" stroke="#ffffff" stroke-width="0.8"/></svg>
<div style="left:325px;top:665.6px;width:1372px;height:1.4px;background:#171717;"></div>
<div style="left:329.5px;top:670px;width:1px;height:15px;background:#2e2e2e;"></div>
<div style="left:334.6px;top:668.2px;width:69px;height:18.3px;background:#1c1c1c;border:1px solid #303030;border-radius:3px;"></div>
<span class="t" style="left:341.4px;top:671.69px;font-size:11px;line-height:11px;color:#d0d0d0;font-weight:400;letter-spacing:0.092px;">50%</span>
<svg style="position:absolute;left:390.1px;top:675.7px;" width="9" height="5" viewBox="0 0 9 5"><path d="M0.5 0.5 L4.5 4.3 L8.5 0.5" fill="none" stroke="#c8c8c8" stroke-width="1.1"/></svg>
<div style="left:407.5px;top:670px;width:1px;height:15px;background:#2e2e2e;"></div>
<div style="left:412.7px;top:668.2px;width:85.1px;height:18.3px;background:#1c1c1c;border:1px solid #303030;border-radius:3px;"></div>
<span class="t" style="left:420px;top:672.19px;font-size:11px;line-height:11px;color:#d0d0d0;font-weight:400;letter-spacing:0.192px;">Full</span>
<svg style="position:absolute;left:484.29999999999995px;top:675.7px;" width="9" height="5" viewBox="0 0 9 5"><path d="M0.5 0.5 L4.5 4.3 L8.5 0.5" fill="none" stroke="#c8c8c8" stroke-width="1.1"/></svg>
<div style="left:502px;top:670px;width:1px;height:15px;background:#2e2e2e;"></div>
<div style="left:507.7px;top:668.5px;width:21.5px;height:18px;background:#171717;border:1px solid #2a2a2a;border-radius:2px;"></div>
<svg style="position:absolute;left:510px;top:671px;" width="17" height="14" viewBox="0 0 17 14"><rect x="0.5" y="0.5" width="12" height="12" fill="none" stroke="#b8b8b8" stroke-width="1.1"/><path d="M8 2 L4 7 H7 L5 11 L10 5.5 H7 Z" fill="#b8b8b8"/><path d="M11 10 H16 L13.5 13 Z" fill="#b8b8b8"/></svg>
<div style="left:530.7px;top:668.5px;width:19px;height:18px;background:#171717;border:1px solid #2a2a2a;border-radius:2px;"></div>
<svg style="position:absolute;left:532.5px;top:671px;" width="15" height="13" viewBox="0 0 15 13"><rect x="0.5" y="0.5" width="14" height="12" fill="none" stroke="#3a8ee6" stroke-width="1.1"/><rect x="2.0" y="2.0" width="2.75" height="2.5" fill="#3a8ee6"/><rect x="7.5" y="2.0" width="2.75" height="2.5" fill="#3a8ee6"/><rect x="4.75" y="4.5" width="2.75" height="2.5" fill="#3a8ee6"/><rect x="10.25" y="4.5" width="2.75" height="2.5" fill="#3a8ee6"/><rect x="2.0" y="7.0" width="2.75" height="2.5" fill="#3a8ee6"/><rect x="7.5" y="7.0" width="2.75" height="2.5" fill="#3a8ee6"/><rect x="4.75" y="9.5" width="2.75" height="2.5" fill="#3a8ee6"/><rect x="10.25" y="9.5" width="2.75" height="2.5" fill="#3a8ee6"/></svg>
<div style="left:552px;top:668.5px;width:20px;height:18px;background:#171717;border:1px solid #2a2a2a;border-radius:2px;"></div>
<svg style="position:absolute;left:554.5px;top:671px;" width="15" height="13" viewBox="0 0 15 13"><path d="M2 2 L13 1 L12 12 L2 10.5 Z" fill="none" stroke="#3a8ee6" stroke-width="1.3"/><rect x="0.5" y="0.5" width="3" height="3" fill="#3a8ee6"/><rect x="11.5" y="0" width="3" height="3" fill="#3a8ee6"/><rect x="10.5" y="10.5" width="3" height="3" fill="#3a8ee6"/><rect x="0.5" y="9" width="3" height="3" fill="#3a8ee6"/></svg>
<svg style="position:absolute;left:576px;top:671px;" width="16" height="13" viewBox="0 0 16 13"><rect x="0.5" y="0.5" width="15" height="12" fill="none" stroke="#b8b8b8" stroke-width="1.1"/><rect x="3.5" y="3" width="9" height="7" fill="#b8b8b8"/></svg>
<svg style="position:absolute;left:598px;top:670px;" width="16" height="17" viewBox="0 0 16 17"><path d="M3 1 V14 M13 1 V14 M0.5 3.5 H15.5 M0.5 11.5 H15.5" stroke="#b8b8b8" stroke-width="1.1"/><path d="M11 14.5 H16 L13.5 17 Z" fill="#b8b8b8"/></svg>
<div style="left:620px;top:670px;width:1px;height:15px;background:#2e2e2e;"></div>
<svg style="position:absolute;left:629px;top:670px;" width="15" height="17" viewBox="0 0 15 17"><circle cx="7" cy="4" r="3.3" fill="#e03030"/><circle cx="4.3" cy="8.5" r="3.3" fill="#24b43c"/><circle cx="9.5" cy="8.5" r="3.3" fill="#2b6ee0"/><path d="M9 13.5 H14 L11.5 16.5 Z" fill="#b8b8b8"/></svg>
<svg style="position:absolute;left:651px;top:670.5px;" width="14" height="14" viewBox="0 0 14 14"><circle cx="7" cy="7" r="6" fill="none" stroke="#b8b8b8" stroke-width="1.6"/><path d="M7 1 L9 7 M13 7 L7 9 M7 13 L5 7 M1 7 L7 5" stroke="#b8b8b8" stroke-width="1.4"/></svg>
<span class="t" style="left:670.6px;top:672.19px;font-size:11px;line-height:11px;color:#3a8ee6;font-weight:400;letter-spacing:0.028px;">+0.0</span>
<div style="left:706px;top:670px;width:1px;height:15px;background:#2e2e2e;"></div>
<svg style="position:absolute;left:714px;top:672px;" width="15" height="12" viewBox="0 0 15 12"><path d="M0.5 3 H4 L5.5 1 H9.5 L11 3 H14.5 V11.5 H0.5 Z" fill="#b8b8b8"/><circle cx="7.5" cy="7" r="2.8" fill="#232323"/><circle cx="7.5" cy="7" r="1.6" fill="#b8b8b8"/></svg>
<svg style="position:absolute;left:736px;top:671px;" width="15" height="13" viewBox="0 0 15 13"><path d="M0.5 5 H3.5 L5 3 H9 L10.5 5 H13.5 V12.5 H0.5 Z" fill="#4a4a4a"/><circle cx="10" cy="4" r="3" fill="none" stroke="#4a4a4a" stroke-width="1.2"/></svg>
<div style="left:758px;top:670px;width:1px;height:15px;background:#2e2e2e;"></div>
<div style="left:762.6px;top:668.2px;width:69.8px;height:18.3px;background:#1c1c1c;border:1px solid #303030;border-radius:3px;"></div>
<span class="t" style="left:772.2px;top:672.19px;font-size:11px;line-height:11px;color:#b0b0b0;font-weight:400;letter-spacing:-0.088px;">0:00:09:20</span>
<div style="left:1292px;top:670px;width:1px;height:15px;background:#2e2e2e;"></div>
<div style="left:1297px;top:668.2px;width:77.7px;height:18.3px;background:#1c1c1c;border:1px solid #303030;border-radius:3px;"></div>
<svg style="position:absolute;left:1304px;top:670.5px;" width="16" height="14" viewBox="0 0 16 14"><path d="M6.5 1 L12 3.5 V9 L6.5 11.5 L1 9 V3.5 Z M1 3.5 L6.5 6 L12 3.5 M6.5 6 V11.5" fill="none" stroke="#a0a0a0" stroke-width="1.2"/><path d="M12 7 L9.5 11 H11.5 L10.5 14 L14.5 9.5 H12.5 Z" fill="#a0a0a0"/></svg>
<span class="t" style="left:1325px;top:672.19px;font-size:11px;line-height:11px;color:#a0a0a0;font-weight:400;letter-spacing:0.192px;">Draft 3D</span>
<div style="left:1378.5px;top:670px;width:1px;height:15px;background:#2e2e2e;"></div>
<svg style="position:absolute;left:1387px;top:671px;" width="14" height="11" viewBox="0 0 14 11"><path d="M3 0.5 H11 L13.5 10.5 H0.5 Z M2 5.5 H12 M7 0.5 V10.5" fill="none" stroke="#555" stroke-width="1"/></svg>
<div style="left:1406px;top:670px;width:1px;height:15px;background:#2e2e2e;"></div>
<div style="left:1413px;top:668.2px;width:86px;height:18.3px;background:#1c1c1c;border:1px solid #303030;border-radius:3px;"></div>
<span class="t" style="left:1421px;top:672.19px;font-size:11px;line-height:11px;color:#d0d0d0;font-weight:400;letter-spacing:-0.074px;">Classic 3D</span>
<svg style="position:absolute;left:1485.5px;top:675.7px;" width="9" height="5" viewBox="0 0 9 5"><path d="M0.5 0.5 L4.5 4.3 L8.5 0.5" fill="none" stroke="#c8c8c8" stroke-width="1.1"/></svg>
<div style="left:1503px;top:670px;width:1px;height:15px;background:#2e2e2e;"></div>
<div style="left:1508px;top:668.2px;width:105px;height:18.3px;background:#1c1c1c;border:1px solid #303030;border-radius:3px;"></div>
<span class="t" style="left:1516px;top:672.19px;font-size:11px;line-height:11px;color:#d0d0d0;font-weight:400;letter-spacing:-0.041px;">Active Camer...</span>
<svg style="position:absolute;left:1599.5px;top:675.7px;" width="9" height="5" viewBox="0 0 9 5"><path d="M0.5 0.5 L4.5 4.3 L8.5 0.5" fill="none" stroke="#c8c8c8" stroke-width="1.1"/></svg>
<div style="left:1617px;top:670px;width:1px;height:15px;background:#2e2e2e;"></div>
<div style="left:1622px;top:668.2px;width:69.4px;height:18.3px;background:#1c1c1c;border:1px solid #303030;border-radius:3px;"></div>
<span class="t" style="left:1630px;top:672.19px;font-size:11px;line-height:11px;color:#d0d0d0;font-weight:400;letter-spacing:0.276px;">1 View</span>
<svg style="position:absolute;left:1677.9px;top:675.7px;" width="9" height="5" viewBox="0 0 9 5"><path d="M0.5 0.5 L4.5 4.3 L8.5 0.5" fill="none" stroke="#c8c8c8" stroke-width="1.1"/></svg>
<span class="t" style="left:1714.4px;top:78.69px;font-size:11px;line-height:11px;color:#d8d8d8;font-weight:400;letter-spacing:0.051px;">Info</span>
<svg style="position:absolute;left:1888px;top:81px;" width="9" height="8" viewBox="0 0 9 8"><path d="M0 0.75 H9 M0 4 H9 M0 7.25 H9" stroke="#c0c0c0" stroke-width="1.2"/></svg>
<div style="left:1709px;top:115px;width:19.75px;height:20px;background:#000000;"></div>
<span class="t" style="left:1735px;top:105.03px;font-size:10px;line-height:10px;color:#a5a5a5;font-weight:400;">R :</span>
<span class="t" style="left:1735px;top:118.63px;font-size:10px;line-height:10px;color:#a5a5a5;font-weight:400;">G :</span>
<span class="t" style="left:1735px;top:132.23px;font-size:10px;line-height:10px;color:#a5a5a5;font-weight:400;">B :</span>
<span class="t" style="left:1735px;top:145.84px;font-size:10px;line-height:10px;color:#a5a5a5;font-weight:400;">A :</span>
<span class="t" style="left:1753.75px;top:145.84px;font-size:10px;line-height:10px;color:#a5a5a5;font-weight:400;">0</span>
<div style="left:1802.7px;top:105.6px;width:1px;height:48.5px;background:#333333;"></div>
<svg style="position:absolute;left:1812.5px;top:125.5px;" width="10" height="10" viewBox="0 0 10 10"><path d="M5 0 V10 M0 5 H10" stroke="#c8c8c8" stroke-width="1.1"/></svg>
<span class="t" style="left:1825.6px;top:104.53px;font-size:10px;line-height:10px;color:#a5a5a5;font-weight:400;letter-spacing:0.393px;">X : 2300</span>
<span class="t" style="left:1825.6px;top:117.53px;font-size:10px;line-height:10px;color:#a5a5a5;font-weight:400;letter-spacing:0.188px;">Y :  448</span>
<div style="left:1707px;top:161.5px;width:191px;height:1px;background:#333333;"></div>
<div style="left:1702px;top:214px;width:204px;height:2px;background:#1a1a1a;"></div>
<span class="t" style="left:1714px;top:225.69px;font-size:11px;line-height:11px;color:#a5a5a5;font-weight:400;letter-spacing:0.141px;">Audio</span>
<div style="left:1702px;top:244px;width:204px;height:2px;background:#1a1a1a;"></div>
<span class="t" style="left:1714px;top:255.69px;font-size:11px;line-height:11px;color:#a5a5a5;font-weight:400;letter-spacing:0.313px;">Preview</span>
<div style="left:1702px;top:274px;width:204px;height:2px;background:#1a1a1a;"></div>
<span class="t" style="left:1714px;top:285.69px;font-size:11px;line-height:11px;color:#a5a5a5;font-weight:400;letter-spacing:-0.092px;">Effects &amp; Presets</span>
<div style="left:1702px;top:304px;width:204px;height:2px;background:#1a1a1a;"></div>
<span class="t" style="left:1714px;top:315.69px;font-size:11px;line-height:11px;color:#a5a5a5;font-weight:400;letter-spacing:0.310px;">Align</span>
<div style="left:1702px;top:334px;width:204px;height:2px;background:#1a1a1a;"></div>
<span class="t" style="left:1714px;top:345.69px;font-size:11px;line-height:11px;color:#a5a5a5;font-weight:400;letter-spacing:0.127px;">Libraries</span>
<div style="left:1702px;top:364px;width:204px;height:2px;background:#1a1a1a;"></div>
<span class="t" style="left:1714px;top:375.69px;font-size:11px;line-height:11px;color:#a5a5a5;font-weight:400;letter-spacing:0.050px;">Character</span>
<div style="left:1702px;top:394px;width:204px;height:2px;background:#1a1a1a;"></div>
<span class="t" style="left:1714px;top:405.69px;font-size:11px;line-height:11px;color:#a5a5a5;font-weight:400;letter-spacing:0.041px;">Paragraph</span>
<div style="left:1702px;top:424px;width:204px;height:2px;background:#1a1a1a;"></div>
<span class="t" style="left:1714px;top:435.69px;font-size:11px;line-height:11px;color:#a5a5a5;font-weight:400;letter-spacing:0.121px;">Tracker</span>
<div style="left:1702px;top:454px;width:204px;height:2px;background:#1a1a1a;"></div>
<span class="t" style="left:1714px;top:465.69px;font-size:11px;line-height:11px;color:#a5a5a5;font-weight:400;letter-spacing:0.201px;">Content-Aware Fill</span>
<div style="left:1702px;top:484px;width:204px;height:2px;background:#1a1a1a;"></div>
<svg style="position:absolute;left:45px;top:705px;" width="6" height="6" viewBox="0 0 6 6"><path d="M0.5 0.5 L5.5 5.5 M5.5 0.5 L0.5 5.5" stroke="#a0a0a0" stroke-width="1"/></svg>
<div style="left:60px;top:701px;width:10px;height:10px;background:#c0aa85;"></div>
<span class="t" style="left:81px;top:701.69px;font-size:11px;line-height:11px;color:#dcdcdc;font-weight:400;letter-spacing:-0.213px;">01 - Render This - SC_43.3</span>
<svg style="position:absolute;left:221px;top:704px;" width="8.5" height="7.5" viewBox="0 0 8.5 7.5"><path d="M0 0.75 H8.5 M0 3.75 H8.5 M0 6.75 H8.5" stroke="#c0c0c0" stroke-width="1.2"/></svg>
<div style="left:45px;top:717px;width:184px;height:2px;background:#c8c8c8;"></div>
<div style="left:265.75px;top:701.3px;width:10px;height:9.5px;background:#a8967a;"></div>
<span class="t" style="left:287px;top:701.69px;font-size:11px;line-height:11px;color:#a0a0a0;font-weight:400;letter-spacing:-0.576px;">SC_43.2</span>
<div style="left:383px;top:701.3px;width:10px;height:9.5px;background:#a8967a;"></div>
<span class="t" style="left:403.75px;top:701.69px;font-size:11px;line-height:11px;color:#a0a0a0;font-weight:400;letter-spacing:0.007px;">Orang</span>
<div style="left:490.75px;top:701.3px;width:10px;height:9.5px;background:#a8967a;"></div>
<span class="t" style="left:512.5px;top:701.69px;font-size:11px;line-height:11px;color:#a0a0a0;font-weight:400;letter-spacing:-0.083px;">Basic 085 Arrow Dashes</span>
<div style="left:688px;top:701.3px;width:10px;height:9.5px;background:#a8967a;"></div>
<span class="t" style="left:709.5px;top:701.69px;font-size:11px;line-height:11px;color:#a0a0a0;font-weight:400;letter-spacing:-0.034px;">Basic 084 Pointer Circle</span>
<div style="left:883px;top:701.3px;width:10px;height:9.5px;background:#a8967a;"></div>
<span class="t" style="left:904.5px;top:701.69px;font-size:11px;line-height:11px;color:#a0a0a0;font-weight:400;letter-spacing:0.308px;">Main Title</span>
<div style="left:1011.25px;top:701.3px;width:10px;height:9.5px;background:#a8967a;"></div>
<span class="t" style="left:1032px;top:701.69px;font-size:11px;line-height:11px;color:#a0a0a0;font-weight:400;letter-spacing:-0.003px;">Circle Line 3</span>
<div style="left:1148.75px;top:701.3px;width:10px;height:9.5px;background:#a8967a;"></div>
<span class="t" style="left:1170px;top:701.69px;font-size:11px;line-height:11px;color:#a0a0a0;font-weight:400;letter-spacing:-0.003px;">Circle Line 2</span>
<div style="left:1287px;top:701.3px;width:10px;height:9.5px;background:#a8967a;"></div>
<span class="t" style="left:1308px;top:701.69px;font-size:11px;line-height:11px;color:#a0a0a0;font-weight:400;letter-spacing:0.080px;">Particles 07</span>
<div style="left:1423px;top:701.3px;width:10px;height:9.5px;background:#a8967a;"></div>
<span class="t" style="left:1443.75px;top:701.69px;font-size:11px;line-height:11px;color:#a0a0a0;font-weight:400;letter-spacing:-0.004px;">Simple Background 04</span>
<div style="left:1610.8px;top:701.3px;width:10px;height:9.5px;background:#a8967a;"></div>
<span class="t" style="left:1632px;top:701.69px;font-size:11px;line-height:11px;color:#a0a0a0;font-weight:400;letter-spacing:-0.020px;">Simple Background 08</span>
<div style="left:1798px;top:701.3px;width:10px;height:9.5px;background:#a8967a;"></div>
<div style="left:1818.7px;top:698px;width:60.299999999999955px;height:18px;overflow:hidden;">
<span class="t" style="left:0px;top:3.69px;font-size:11px;line-height:11px;color:#a0a0a0;font-weight:400;">Simple Background 02</span>
</div>
<div style="left:1879px;top:698px;width:1px;height:18px;background:#2a2a2a;"></div>
<svg style="position:absolute;left:1905px;top:703px;" width="11" height="8" viewBox="0 0 11 8"><path d="M1 0.8 L4.5 4 L1 7.2 M5.5 0.8 L9 4 L5.5 7.2" fill="none" stroke="#c8c8c8" stroke-width="1.6"/></svg>
<span class="t" style="left:16.6px;top:726.46px;font-size:12.8px;line-height:12.8px;color:#3a8ee6;font-weight:700;transform:scaleX(1.2);transform-origin:0 0;letter-spacing:0.05px;">0:00:09:20</span>
<span class="t" style="left:11.9px;top:741.91px;font-size:10.5px;line-height:10.5px;color:#2a72c8;font-weight:400;letter-spacing:-0.038px;">00245 (25.00 fps)</span>
<div style="left:107.3px;top:728.6px;width:425px;height:19px;background:#161616;border:1px solid #313131;border-radius:3px;"></div>
<svg style="position:absolute;left:113.5px;top:732px;" width="18" height="12" viewBox="0 0 18 12"><circle cx="6.5" cy="4.3" r="3.5" fill="none" stroke="#b8b8b8" stroke-width="1.1"/><path d="M4 6.8 L0.5 10.5" stroke="#b8b8b8" stroke-width="1.3"/><path d="M11.5 7 H17 L14.25 9.5 Z" fill="#b8b8b8"/></svg>
<svg style="position:absolute;left:548px;top:732px;" width="18" height="14" viewBox="0 0 18 14"><rect x="0" y="1.2" width="3.5" height="2.6" fill="#b8b8b8"/><path d="M3.5 2.5 H8.5 M5.5 2.5 V8.5 H8.5" fill="none" stroke="#b8b8b8" stroke-width="1.2"/><rect x="8" y="1" width="7" height="3" fill="#b8b8b8"/><rect x="8" y="7" width="7" height="3" fill="#b8b8b8"/><path d="M12 11 H17 L14.5 13.5 Z" fill="#b8b8b8"/></svg>
<svg style="position:absolute;left:581.5px;top:731px;" width="17" height="14" viewBox="0 0 17 14"><path d="M2 8.5 A6.5 6.5 0 0 1 15 8.5 Z" fill="#b8b8b8"/><rect x="0" y="8.5" width="17" height="5" fill="#8a8a8a"/><path d="M8.5 3 V13" stroke="#232323" stroke-width="1.5"/><circle cx="8.5" cy="5.5" r="1.5" fill="#232323"/></svg>
<svg style="position:absolute;left:608.5px;top:730.5px;" width="15.5" height="15" viewBox="0 0 15.5 15"><rect x="4.5" y="0.5" width="10.5" height="12" fill="none" stroke="#b8b8b8" stroke-width="1.2"/><rect x="6.5" y="4.5" width="6.5" height="4" fill="#b8b8b8"/><path d="M2.5 3 V14 H12" fill="none" stroke="#b8b8b8" stroke-width="1.2"/><path d="M0.5 5 V15" stroke="#b8b8b8"/></svg>
<svg style="position:absolute;left:634.5px;top:730.5px;" width="15" height="15" viewBox="0 0 15 15"><ellipse cx="9" cy="6" rx="5.5" ry="5.5" fill="#2e7fd8"/><path d="M2 9 A5 5 0 0 0 10 13 M0.8 7 A5 5 0 0 0 4 12" fill="none" stroke="#2e7fd8" stroke-width="1.4"/></svg>
<svg style="position:absolute;left:668px;top:730px;" width="17" height="15.5" viewBox="0 0 17 15.5"><rect x="1" y="2.5" width="15" height="12" fill="none" stroke="#b8b8b8" stroke-width="1.3"/><path d="M3 5 C6.5 5 7.5 12 13.5 12" fill="none" stroke="#b8b8b8" stroke-width="1.2"/><path d="M3 0 V2.5 M6 0 V2.5 M9 0 V2.5 M12 0 V2.5 M15 0 V2.5" stroke="#b8b8b8" stroke-width="0.8"/></svg>
<div style="left:2px;top:755px;width:699px;height:1.5px;background:#111111;"></div>
<div style="left:2px;top:756.5px;width:698px;height:18px;background:#2d2d2d;"></div>
<div style="left:2px;top:774.5px;width:1916px;height:1.5px;background:#0c0c0c;"></div>
<svg style="position:absolute;left:7.5px;top:762.5px;" width="11" height="8" viewBox="0 0 11 8"><path d="M0.5 4 C3 0 8 0 10.5 4 C8 8 3 8 0.5 4 Z" fill="#b8b8b8"/><circle cx="5.5" cy="4" r="1.6" fill="#2d2d2d"/></svg>
<svg style="position:absolute;left:21.5px;top:761px;" width="12.5" height="11" viewBox="0 0 12.5 11"><path d="M0.5 3.5 H3 L6.5 0.5 V10.5 L3 7.5 H0.5 Z" fill="#b8b8b8"/><path d="M8 3 A3 3 0 0 1 8 8 M9.5 1.5 A5 5 0 0 1 9.5 9.5" fill="none" stroke="#b8b8b8" stroke-width="1"/></svg>
<svg style="position:absolute;left:38.5px;top:762.5px;" width="8" height="8" viewBox="0 0 8 8"><circle cx="4" cy="4" r="3.7" fill="#b8b8b8"/></svg>
<svg style="position:absolute;left:52.5px;top:760.5px;" width="10.5" height="11" viewBox="0 0 10.5 11"><path d="M2.5 5 V3.2 A2.75 2.75 0 0 1 8 3.2 V5" fill="none" stroke="#b8b8b8" stroke-width="1.5"/><rect x="0.5" y="5" width="9.5" height="6" fill="#b8b8b8"/><rect x="4.5" y="6.5" width="1.5" height="3" fill="#2d2d2d"/></svg>
<div style="left:69px;top:760.5px;width:1px;height:12px;background:#1a1a1a;"></div>
<svg style="position:absolute;left:82.5px;top:760px;" width="13.5" height="13" viewBox="0 0 13.5 13"><path d="M0.5 1.5 V6 L7.5 12.5 L12.5 7.5 L6 0.5 H1.5 Z" fill="#b8b8b8"/><circle cx="3.5" cy="3.5" r="1.2" fill="#2d2d2d"/></svg>
<div style="left:101px;top:760.5px;width:1px;height:12px;background:#1a1a1a;"></div>
<span class="t" style="left:107px;top:761.88px;font-size:9px;line-height:9px;color:#a0a0a0;font-weight:400;">#</span>
<span class="t" style="left:122px;top:761.88px;font-size:9px;line-height:9px;color:#a0a0a0;font-weight:400;">.</span>
<div style="left:134.5px;top:760.5px;width:1px;height:12px;background:#1a1a1a;"></div>
<span class="t" style="left:139.8px;top:761.53px;font-size:10px;line-height:10px;color:#a5a5a5;font-weight:400;letter-spacing:-0.363px;">Layer Name</span>
<div style="left:264.5px;top:760.5px;width:1px;height:12px;background:#1a1a1a;"></div>
<svg style="position:absolute;left:269px;top:760.5px;" width="13" height="11" viewBox="0 0 13 11"><path d="M1.8 6.3 A4.7 4.9 0 0 1 11.2 6.3 Z" fill="#b8b8b8"/><circle cx="4.6" cy="3.6" r="1" fill="#2d2d2d"/><circle cx="8.4" cy="3.6" r="1" fill="#2d2d2d"/><path d="M0 7.6 H5 M8 7.6 H13" stroke="#b8b8b8" stroke-width="1.2"/><path d="M6.5 6 V10.5" stroke="#b8b8b8" stroke-width="1.6"/></svg>
<svg style="position:absolute;left:285px;top:760.5px;" width="11.5" height="11.5" viewBox="0 0 11.5 11.5"><circle cx="5.75" cy="5.75" r="2.4" fill="none" stroke="#b8b8b8" stroke-width="1.1"/><path d="M9.05 5.75 L11.05 5.75" stroke="#b8b8b8" stroke-width="1.1"/><path d="M8.08 8.08 L9.50 9.50" stroke="#b8b8b8" stroke-width="1.1"/><path d="M5.75 9.05 L5.75 11.05" stroke="#b8b8b8" stroke-width="1.1"/><path d="M3.42 8.08 L2.00 9.50" stroke="#b8b8b8" stroke-width="1.1"/><path d="M2.45 5.75 L0.45 5.75" stroke="#b8b8b8" stroke-width="1.1"/><path d="M3.42 3.42 L2.00 2.00" stroke="#b8b8b8" stroke-width="1.1"/><path d="M5.75 2.45 L5.75 0.45" stroke="#b8b8b8" stroke-width="1.1"/><path d="M8.08 3.42 L9.50 2.00" stroke="#b8b8b8" stroke-width="1.1"/></svg>
<svg style="position:absolute;left:300px;top:760px;" width="11" height="12" viewBox="0 0 11 12"><path d="M0.5 0.5 L10.5 11.5" stroke="#b8b8b8" stroke-width="1.4" stroke-dasharray="2 1"/></svg>
<span class="t" style="left:314.5px;top:758px;font-family:'Liberation Serif',serif;font-style:italic;font-size:15px;line-height:15px;color:#b8b8b8;letter-spacing:-0.6px;">fx</span>
<svg style="position:absolute;left:329px;top:760.5px;" width="13" height="12.5" viewBox="0 0 13 12.5"><rect x="2.3" y="0.8" width="10.2" height="8.5" fill="#b8b8b8"/><rect x="3.2" y="1.6" width="1" height="1" fill="#2d2d2d"/><rect x="10.8" y="1.6" width="1" height="1" fill="#2d2d2d"/><rect x="3.2" y="3.8000000000000003" width="1" height="1" fill="#2d2d2d"/><rect x="10.8" y="3.8000000000000003" width="1" height="1" fill="#2d2d2d"/><rect x="3.2" y="6.0" width="1" height="1" fill="#2d2d2d"/><rect x="10.8" y="6.0" width="1" height="1" fill="#2d2d2d"/><rect x="3.2" y="8.200000000000001" width="1" height="1" fill="#2d2d2d"/><rect x="10.8" y="8.200000000000001" width="1" height="1" fill="#2d2d2d"/><rect x="5.5" y="4.3" width="4" height="1.2" fill="#2d2d2d"/><path d="M0.6 3 V11.7 H11" fill="none" stroke="#b8b8b8" stroke-width="1.1"/></svg>
<svg style="position:absolute;left:344px;top:760px;" width="14" height="13.5" viewBox="0 0 14 13.5"><circle cx="8.3" cy="5.3" r="4.5" fill="#6a6a6a" stroke="#b8b8b8" stroke-width="1"/><path d="M4.2 3.5 A4.5 4.5 0 0 0 9.5 10.3 M2.2 5.7 A4.5 4.5 0 0 0 7.3 12.3 M0.8 8 A4 4 0 0 0 4.8 13" fill="none" stroke="#b8b8b8" stroke-width="0.9"/></svg>
<svg style="position:absolute;left:360.5px;top:760.5px;" width="11" height="11" viewBox="0 0 11 11"><circle cx="5.5" cy="5.5" r="4.8" fill="none" stroke="#b8b8b8" stroke-width="1.2"/><path d="M9.2 1.8 A5.2 5.2 0 0 1 1.8 9.2 Z" fill="#b8b8b8"/></svg>
<svg style="position:absolute;left:375.5px;top:760.5px;" width="11" height="11.5" viewBox="0 0 11 11.5"><path d="M5.5 0.8 L10.2 3.2 V8.3 L5.5 10.7 L0.8 8.3 V3.2 Z M0.8 3.2 L5.5 5.6 L10.2 3.2 M5.5 5.6 V10.7" fill="none" stroke="#b8b8b8" stroke-width="1.1"/></svg>
<div style="left:401px;top:760.5px;width:1px;height:12px;background:#1a1a1a;"></div>
<span class="t" style="left:407.3px;top:761.53px;font-size:10px;line-height:10px;color:#a5a5a5;font-weight:400;letter-spacing:-0.572px;">Mode</span>
<span class="t" style="left:483px;top:761.53px;font-size:10px;line-height:10px;color:#a5a5a5;font-weight:400;">T</span>
<span class="t" style="left:497.8px;top:761.53px;font-size:10px;line-height:10px;color:#a5a5a5;font-weight:400;letter-spacing:-0.203px;">.TrkMat</span>
<div style="left:567.3px;top:761.5px;width:1px;height:10px;background:#1a1a1a;"></div>
<span class="t" style="left:573.3px;top:761.53px;font-size:10px;line-height:10px;color:#a5a5a5;font-weight:400;letter-spacing:-0.478px;">Parent &amp; Link</span>
<div style="left:684.3px;top:761.5px;width:1px;height:10px;background:#1a1a1a;"></div>
<div style="left:2px;top:776px;width:698px;height:16px;background:#2d2d2d;"></div>
<div style="left:2px;top:792px;width:698px;height:1px;background:#262626;"></div>
<div style="left:6px;top:777.2px;width:12.8px;height:12.5px;background:#222222;"></div>
<div style="left:36.2px;top:777.2px;width:12.8px;height:12.5px;background:#222222;"></div>
<div style="left:51px;top:777.2px;width:13px;height:12.5px;background:#222222;"></div>
<svg style="position:absolute;left:7.2px;top:779.8px;" width="11.2" height="7.5" viewBox="0 0 11.2 7.5"><path d="M0.5 3.75 C3 0 8.2 0 10.7 3.75 C8.2 7.5 3 7.5 0.5 3.75 Z" fill="#c8c8c8"/><circle cx="5.6" cy="3.75" r="1.6" fill="#222222"/></svg>
<svg style="position:absolute;left:75.5px;top:781px;" width="5" height="8" viewBox="0 0 5 8"><path d="M0.8 0.8 L4 4 L0.8 7.2" fill="none" stroke="#a0a0a0" stroke-width="1"/></svg>
<div style="left:87px;top:778px;width:12px;height:12px;background:#6b7fe3;"></div>
<span class="t" style="left:108.4px;top:778.29px;font-size:11px;line-height:11px;color:#a5a5a5;font-weight:400;">1</span>
<svg style="position:absolute;left:137.5px;top:778px;" width="12" height="12" viewBox="0 0 12 12"><path d="M6 0.5 L7.5 4.5 L11.7 4.6 L8.4 7.2 L9.6 11.4 L6 9 L2.4 11.4 L3.6 7.2 L0.3 4.6 L4.5 4.5 Z" fill="#c0c0c0"/></svg>
<span class="t" style="left:157.2px;top:779.19px;font-size:11px;line-height:11px;color:#a5a5a5;font-weight:400;letter-spacing:0.170px;">Green Ball</span>
<div style="left:269.2px;top:777.2px;width:12.6px;height:12.5px;background:#222222;"></div>
<svg style="position:absolute;left:269.5px;top:778.2px;" width="13" height="11" viewBox="0 0 13 11"><path d="M1.8 6.3 A4.7 4.9 0 0 1 11.2 6.3 Z" fill="#c0c0c0"/><circle cx="4.6" cy="3.6" r="1" fill="#222222"/><circle cx="8.4" cy="3.6" r="1" fill="#222222"/><path d="M0 7.6 H5 M8 7.6 H13" stroke="#c0c0c0" stroke-width="1.2"/><path d="M6.5 6 V10.5" stroke="#c0c0c0" stroke-width="1.6"/></svg>
<div style="left:284px;top:777.2px;width:12.8px;height:12.5px;background:#222222;"></div>
<svg style="position:absolute;left:284.7px;top:777.7px;" width="11.5" height="11.5" viewBox="0 0 11.5 11.5"><circle cx="5.75" cy="5.75" r="2.4" fill="none" stroke="#8a8a8a" stroke-width="0.9"/><path d="M9.05 5.75 L11.05 5.75" stroke="#8a8a8a" stroke-width="0.9"/><path d="M8.08 8.08 L9.50 9.50" stroke="#8a8a8a" stroke-width="0.9"/><path d="M5.75 9.05 L5.75 11.05" stroke="#8a8a8a" stroke-width="0.9"/><path d="M3.42 8.08 L2.00 9.50" stroke="#8a8a8a" stroke-width="0.9"/><path d="M2.45 5.75 L0.45 5.75" stroke="#8a8a8a" stroke-width="0.9"/><path d="M3.42 3.42 L2.00 2.00" stroke="#8a8a8a" stroke-width="0.9"/><path d="M5.75 2.45 L5.75 0.45" stroke="#8a8a8a" stroke-width="0.9"/><path d="M8.08 3.42 L9.50 2.00" stroke="#8a8a8a" stroke-width="0.9"/></svg>
<div style="left:299px;top:777.2px;width:12.8px;height:12.5px;background:#222222;"></div>
<svg style="position:absolute;left:300px;top:778px;" width="11" height="11" viewBox="0 0 11 11"><path d="M1 10.5 L10.5 1" stroke="#c8c8c8" stroke-width="1.2"/></svg>
<div style="left:344px;top:777.2px;width:12.8px;height:12.5px;background:#222222;"></div>
<div style="left:359.2px;top:777.2px;width:12.8px;height:12.5px;background:#222222;"></div>
<div style="left:374px;top:777.2px;width:13px;height:12.5px;background:#222222;"></div>
<div style="left:405px;top:777.2px;width:69px;height:13.8px;background:#222222;"></div>
<span class="t" style="left:412.3px;top:778.99px;font-size:11px;line-height:11px;color:#c0c0c0;font-weight:400;letter-spacing:0.370px;">Normal</span>
<svg style="position:absolute;left:461.8px;top:782px;" width="8" height="5" viewBox="0 0 8 5"><path d="M0.5 0.5 L4 4 L7.5 0.5" fill="none" stroke="#c0c0c0" stroke-width="1.1"/></svg>
<div style="left:479px;top:777.2px;width:13px;height:13.8px;background:#222222;"></div>
<svg style="position:absolute;left:571.7px;top:777.3px;" width="13" height="13" viewBox="0 0 13 13"><path d="M5.13 5.98 L5.04 6.11 L4.97 6.26 L4.93 6.43 L4.91 6.62 L4.93 6.81 L4.99 7.00 L5.08 7.20 L5.20 7.38 L5.36 7.55 L5.56 7.69 L5.78 7.81 L6.03 7.89 L6.29 7.93 L6.57 7.93 L6.86 7.88 L7.14 7.78 L7.42 7.64 L7.67 7.44 L7.90 7.20 L8.09 6.93 L8.24 6.61 L8.34 6.27 L8.39 5.90 L8.38 5.52 L8.31 5.14 L8.18 4.77 L7.99 4.41 L7.73 4.08 L7.42 3.78 L7.06 3.53 L6.66 3.34 L6.22 3.21 L5.76 3.14 L5.28 3.15 L4.80 3.23 L4.33 3.39 L3.88 3.63 L3.47 3.94 L3.10 4.31 L2.78 4.75 L2.54 5.24 L2.37 5.77 L2.28 6.33 L2.27 6.90 L2.36 7.48 L2.54 8.05 L2.81 8.60 L3.17 9.10 L3.60 9.55 L4.11 9.93 L4.68 10.24 L5.30 10.46 L5.95 10.58 L6.63 10.60 L7.31 10.52 L7.98 10.33 L8.62 10.04 L9.22 9.64 L9.76 9.15 L10.22 8.58 L10.59 7.93 L10.87 7.23 L11.03 6.48 L11.08 5.71 L11.01 4.92 L10.82 4.15 L10.51 3.41 L10.08 2.71 L9.55 2.08 L8.91 1.54" fill="none" stroke="#c0c0c0" stroke-width="1.1"/></svg>
<div style="left:591px;top:777.2px;width:89.2px;height:13.8px;background:#222222;"></div>
<span class="t" style="left:597.8px;top:778.99px;font-size:11px;line-height:11px;color:#c0c0c0;font-weight:400;letter-spacing:-0.034px;">2. Green Ball</span>
<svg style="position:absolute;left:667.7px;top:782px;" width="8" height="5" viewBox="0 0 8 5"><path d="M0.5 0.5 L4 4 L7.5 0.5" fill="none" stroke="#c0c0c0" stroke-width="1.1"/></svg>
<div style="left:2px;top:793px;width:698px;height:16px;background:#2d2d2d;"></div>
<div style="left:2px;top:809px;width:698px;height:1px;background:#262626;"></div>
<div style="left:6px;top:794.2px;width:12.8px;height:12.5px;background:#222222;"></div>
<div style="left:36.2px;top:794.2px;width:12.8px;height:12.5px;background:#222222;"></div>
<div style="left:51px;top:794.2px;width:13px;height:12.5px;background:#222222;"></div>
<svg style="position:absolute;left:7.2px;top:796.8px;" width="11.2" height="7.5" viewBox="0 0 11.2 7.5"><path d="M0.5 3.75 C3 0 8.2 0 10.7 3.75 C8.2 7.5 3 7.5 0.5 3.75 Z" fill="#c8c8c8"/><circle cx="5.6" cy="3.75" r="1.6" fill="#222222"/></svg>
<svg style="position:absolute;left:75.5px;top:798px;" width="5" height="8" viewBox="0 0 5 8"><path d="M0.8 0.8 L4 4 L0.8 7.2" fill="none" stroke="#a0a0a0" stroke-width="1"/></svg>
<div style="left:87px;top:795px;width:12px;height:12px;background:#6b7fe3;"></div>
<span class="t" style="left:108.4px;top:795.29px;font-size:11px;line-height:11px;color:#a5a5a5;font-weight:400;">2</span>
<svg style="position:absolute;left:137.5px;top:795px;" width="12" height="12" viewBox="0 0 12 12"><path d="M6 0.5 L7.5 4.5 L11.7 4.6 L8.4 7.2 L9.6 11.4 L6 9 L2.4 11.4 L3.6 7.2 L0.3 4.6 L4.5 4.5 Z" fill="#c0c0c0"/></svg>
<span class="t" style="left:157.2px;top:796.19px;font-size:11px;line-height:11px;color:#a5a5a5;font-weight:400;letter-spacing:0.043px;">Green Ball Echo</span>
<div style="left:269.2px;top:794.2px;width:12.6px;height:12.5px;background:#222222;"></div>
<svg style="position:absolute;left:269.5px;top:795.2px;" width="13" height="11" viewBox="0 0 13 11"><path d="M1.8 6.3 A4.7 4.9 0 0 1 11.2 6.3 Z" fill="#c0c0c0"/><circle cx="4.6" cy="3.6" r="1" fill="#222222"/><circle cx="8.4" cy="3.6" r="1" fill="#222222"/><path d="M0 7.6 H5 M8 7.6 H13" stroke="#c0c0c0" stroke-width="1.2"/><path d="M6.5 6 V10.5" stroke="#c0c0c0" stroke-width="1.6"/></svg>
<div style="left:284px;top:794.2px;width:12.8px;height:12.5px;background:#222222;"></div>
<svg style="position:absolute;left:284.7px;top:794.7px;" width="11.5" height="11.5" viewBox="0 0 11.5 11.5"><circle cx="5.75" cy="5.75" r="2.4" fill="none" stroke="#8a8a8a" stroke-width="0.9"/><path d="M9.05 5.75 L11.05 5.75" stroke="#8a8a8a" stroke-width="0.9"/><path d="M8.08 8.08 L9.50 9.50" stroke="#8a8a8a" stroke-width="0.9"/><path d="M5.75 9.05 L5.75 11.05" stroke="#8a8a8a" stroke-width="0.9"/><path d="M3.42 8.08 L2.00 9.50" stroke="#8a8a8a" stroke-width="0.9"/><path d="M2.45 5.75 L0.45 5.75" stroke="#8a8a8a" stroke-width="0.9"/><path d="M3.42 3.42 L2.00 2.00" stroke="#8a8a8a" stroke-width="0.9"/><path d="M5.75 2.45 L5.75 0.45" stroke="#8a8a8a" stroke-width="0.9"/><path d="M8.08 3.42 L9.50 2.00" stroke="#8a8a8a" stroke-width="0.9"/></svg>
<div style="left:299px;top:794.2px;width:12.8px;height:12.5px;background:#222222;"></div>
<svg style="position:absolute;left:300px;top:795px;" width="11" height="11" viewBox="0 0 11 11"><path d="M1 10.5 L10.5 1" stroke="#c8c8c8" stroke-width="1.2"/></svg>
<div style="left:314px;top:794.2px;width:12.8px;height:12.5px;background:#222222;"></div>
<span class="t" style="left:314.5px;top:791.5px;font-family:'Liberation Serif',serif;font-style:italic;font-size:15px;line-height:15px;color:#c0c0c0;letter-spacing:-0.6px;">fx</span>
<div style="left:344px;top:794.2px;width:12.8px;height:12.5px;background:#222222;"></div>
<svg style="position:absolute;left:344px;top:794.5px;" width="14" height="13.5" viewBox="0 0 14 13.5"><circle cx="8.3" cy="5.3" r="4.5" fill="#6a6a6a" stroke="#c0c0c0" stroke-width="1"/><path d="M4.2 3.5 A4.5 4.5 0 0 0 9.5 10.3 M2.2 5.7 A4.5 4.5 0 0 0 7.3 12.3 M0.8 8 A4 4 0 0 0 4.8 13" fill="none" stroke="#c0c0c0" stroke-width="0.9"/></svg>
<div style="left:359.2px;top:794.2px;width:12.8px;height:12.5px;background:#222222;"></div>
<div style="left:374px;top:794.2px;width:13px;height:12.5px;background:#222222;"></div>
<div style="left:405px;top:794.2px;width:69px;height:13.8px;background:#222222;"></div>
<span class="t" style="left:412.3px;top:795.99px;font-size:11px;line-height:11px;color:#c0c0c0;font-weight:400;letter-spacing:0.370px;">Normal</span>
<svg style="position:absolute;left:461.8px;top:799px;" width="8" height="5" viewBox="0 0 8 5"><path d="M0.5 0.5 L4 4 L7.5 0.5" fill="none" stroke="#c0c0c0" stroke-width="1.1"/></svg>
<div style="left:479px;top:794.2px;width:13px;height:13.8px;background:#222222;"></div>
<div style="left:497.8px;top:794.2px;width:65.4px;height:13.8px;background:#222222;"></div>
<span class="t" style="left:505.3px;top:795.99px;font-size:11px;line-height:11px;color:#c0c0c0;font-weight:400;letter-spacing:-0.133px;">None</span>
<svg style="position:absolute;left:551px;top:799px;" width="8" height="5" viewBox="0 0 8 5"><path d="M0.5 0.5 L4 4 L7.5 0.5" fill="none" stroke="#c0c0c0" stroke-width="1.1"/></svg>
<svg style="position:absolute;left:571.7px;top:794.3px;" width="13" height="13" viewBox="0 0 13 13"><path d="M5.13 5.98 L5.04 6.11 L4.97 6.26 L4.93 6.43 L4.91 6.62 L4.93 6.81 L4.99 7.00 L5.08 7.20 L5.20 7.38 L5.36 7.55 L5.56 7.69 L5.78 7.81 L6.03 7.89 L6.29 7.93 L6.57 7.93 L6.86 7.88 L7.14 7.78 L7.42 7.64 L7.67 7.44 L7.90 7.20 L8.09 6.93 L8.24 6.61 L8.34 6.27 L8.39 5.90 L8.38 5.52 L8.31 5.14 L8.18 4.77 L7.99 4.41 L7.73 4.08 L7.42 3.78 L7.06 3.53 L6.66 3.34 L6.22 3.21 L5.76 3.14 L5.28 3.15 L4.80 3.23 L4.33 3.39 L3.88 3.63 L3.47 3.94 L3.10 4.31 L2.78 4.75 L2.54 5.24 L2.37 5.77 L2.28 6.33 L2.27 6.90 L2.36 7.48 L2.54 8.05 L2.81 8.60 L3.17 9.10 L3.60 9.55 L4.11 9.93 L4.68 10.24 L5.30 10.46 L5.95 10.58 L6.63 10.60 L7.31 10.52 L7.98 10.33 L8.62 10.04 L9.22 9.64 L9.76 9.15 L10.22 8.58 L10.59 7.93 L10.87 7.23 L11.03 6.48 L11.08 5.71 L11.01 4.92 L10.82 4.15 L10.51 3.41 L10.08 2.71 L9.55 2.08 L8.91 1.54" fill="none" stroke="#c0c0c0" stroke-width="1.1"/></svg>
<div style="left:591px;top:794.2px;width:89.2px;height:13.8px;background:#222222;"></div>
<span class="t" style="left:598.4px;top:795.99px;font-size:11px;line-height:11px;color:#c0c0c0;font-weight:400;letter-spacing:-0.133px;">None</span>
<svg style="position:absolute;left:667.7px;top:799px;" width="8" height="5" viewBox="0 0 8 5"><path d="M0.5 0.5 L4 4 L7.5 0.5" fill="none" stroke="#c0c0c0" stroke-width="1.1"/></svg>
<div style="left:2px;top:810px;width:698px;height:16px;background:#2d2d2d;"></div>
<div style="left:2px;top:826px;width:698px;height:1px;background:#262626;"></div>
<div style="left:6px;top:811.2px;width:12.8px;height:12.5px;background:#222222;"></div>
<div style="left:21.2px;top:811.2px;width:12.7px;height:12.5px;background:#222222;"></div>
<div style="left:36.2px;top:811.2px;width:12.8px;height:12.5px;background:#222222;"></div>
<div style="left:51px;top:811.2px;width:13px;height:12.5px;background:#222222;"></div>
<svg style="position:absolute;left:7.2px;top:813.8px;" width="11.2" height="7.5" viewBox="0 0 11.2 7.5"><path d="M0.5 3.75 C3 0 8.2 0 10.7 3.75 C8.2 7.5 3 7.5 0.5 3.75 Z" fill="#c8c8c8"/><circle cx="5.6" cy="3.75" r="1.6" fill="#222222"/></svg>
<svg style="position:absolute;left:21.5px;top:812px;" width="12.5" height="11.5" viewBox="0 0 12.5 11.5"><path d="M0.5 3.5 H3 L5.5 0.5 V10.5 L3 7.5 H0.5 Z" fill="#c8c8c8"/><path d="M7.5 3.5 A2.5 2.5 0 0 1 7.5 7.5 M8.5 1.5 A4.5 4.5 0 0 1 8.5 9.5" fill="none" stroke="#c8c8c8" stroke-width="1"/></svg>
<svg style="position:absolute;left:75.5px;top:815px;" width="5" height="8" viewBox="0 0 5 8"><path d="M0.8 0.8 L4 4 L0.8 7.2" fill="none" stroke="#a0a0a0" stroke-width="1"/></svg>
<div style="left:87px;top:812px;width:12px;height:12px;background:#b09d7b;"></div>
<span class="t" style="left:108.4px;top:812.29px;font-size:11px;line-height:11px;color:#a5a5a5;font-weight:400;">3</span>
<svg style="position:absolute;left:136px;top:811.5px;" width="17" height="13.5" viewBox="0 0 17 13.5"><rect x="0.3" y="0.3" width="16.2" height="13" rx="0.8" fill="#c4c4c4"/><ellipse cx="1.7" cy="2.2" rx="0.7" ry="1" fill="#111"/><ellipse cx="14.9" cy="2.2" rx="0.7" ry="1" fill="#111"/><ellipse cx="1.7" cy="5.5" rx="0.7" ry="1" fill="#111"/><ellipse cx="14.9" cy="5.5" rx="0.7" ry="1" fill="#111"/><ellipse cx="1.7" cy="8.8" rx="0.7" ry="1" fill="#111"/><ellipse cx="14.9" cy="8.8" rx="0.7" ry="1" fill="#111"/><ellipse cx="1.7" cy="12.099999999999998" rx="0.7" ry="1" fill="#111"/><ellipse cx="14.9" cy="12.099999999999998" rx="0.7" ry="1" fill="#111"/><rect x="3.5" y="11.3" width="9.6" height="0.9" fill="#222"/><path d="M7.5 5 L12.2 4.2 L12.2 9.5 L9 9.5 Z" fill="#f03a3a" stroke="#222" stroke-width="0.5"/><path d="M4.8 10 L7.8 5.8 L10.8 10 Z" fill="#16a820" stroke="#222" stroke-width="0.5"/><circle cx="6" cy="5" r="2.3" fill="#2f8cf0" stroke="#222" stroke-width="0.5"/></svg>
<span class="t" style="left:157.2px;top:813.19px;font-size:11px;line-height:11px;color:#a5a5a5;font-weight:400;letter-spacing:0.573px;">Animation</span>
<div style="left:269.2px;top:811.2px;width:12.6px;height:12.5px;background:#222222;"></div>
<svg style="position:absolute;left:269.5px;top:812.2px;" width="13" height="11" viewBox="0 0 13 11"><path d="M1.8 6.3 A4.7 4.9 0 0 1 11.2 6.3 Z" fill="#c0c0c0"/><circle cx="4.6" cy="3.6" r="1" fill="#222222"/><circle cx="8.4" cy="3.6" r="1" fill="#222222"/><path d="M0 7.6 H5 M8 7.6 H13" stroke="#c0c0c0" stroke-width="1.2"/><path d="M6.5 6 V10.5" stroke="#c0c0c0" stroke-width="1.6"/></svg>
<div style="left:284px;top:811.2px;width:12.8px;height:12.5px;background:#222222;"></div>
<div style="left:299px;top:811.2px;width:12.8px;height:12.5px;background:#222222;"></div>
<svg style="position:absolute;left:300px;top:812px;" width="11" height="11" viewBox="0 0 11 11"><path d="M1 10.5 L10.5 1" stroke="#c8c8c8" stroke-width="1.2"/></svg>
<div style="left:344px;top:811.2px;width:12.8px;height:12.5px;background:#222222;"></div>
<div style="left:359.2px;top:811.2px;width:12.8px;height:12.5px;background:#222222;"></div>
<div style="left:374px;top:811.2px;width:13px;height:12.5px;background:#222222;"></div>
<div style="left:405px;top:811.2px;width:69px;height:13.8px;background:#222222;"></div>
<span class="t" style="left:412.3px;top:812.99px;font-size:11px;line-height:11px;color:#c0c0c0;font-weight:400;letter-spacing:0.370px;">Normal</span>
<svg style="position:absolute;left:461.8px;top:816px;" width="8" height="5" viewBox="0 0 8 5"><path d="M0.5 0.5 L4 4 L7.5 0.5" fill="none" stroke="#c0c0c0" stroke-width="1.1"/></svg>
<div style="left:479px;top:811.2px;width:13px;height:13.8px;background:#222222;"></div>
<div style="left:497.8px;top:811.2px;width:65.4px;height:13.8px;background:#222222;"></div>
<span class="t" style="left:505.3px;top:812.99px;font-size:11px;line-height:11px;color:#c0c0c0;font-weight:400;letter-spacing:-0.133px;">None</span>
<svg style="position:absolute;left:551px;top:816px;" width="8" height="5" viewBox="0 0 8 5"><path d="M0.5 0.5 L4 4 L7.5 0.5" fill="none" stroke="#c0c0c0" stroke-width="1.1"/></svg>
<svg style="position:absolute;left:571.7px;top:811.3px;" width="13" height="13" viewBox="0 0 13 13"><path d="M5.13 5.98 L5.04 6.11 L4.97 6.26 L4.93 6.43 L4.91 6.62 L4.93 6.81 L4.99 7.00 L5.08 7.20 L5.20 7.38 L5.36 7.55 L5.56 7.69 L5.78 7.81 L6.03 7.89 L6.29 7.93 L6.57 7.93 L6.86 7.88 L7.14 7.78 L7.42 7.64 L7.67 7.44 L7.90 7.20 L8.09 6.93 L8.24 6.61 L8.34 6.27 L8.39 5.90 L8.38 5.52 L8.31 5.14 L8.18 4.77 L7.99 4.41 L7.73 4.08 L7.42 3.78 L7.06 3.53 L6.66 3.34 L6.22 3.21 L5.76 3.14 L5.28 3.15 L4.80 3.23 L4.33 3.39 L3.88 3.63 L3.47 3.94 L3.10 4.31 L2.78 4.75 L2.54 5.24 L2.37 5.77 L2.28 6.33 L2.27 6.90 L2.36 7.48 L2.54 8.05 L2.81 8.60 L3.17 9.10 L3.60 9.55 L4.11 9.93 L4.68 10.24 L5.30 10.46 L5.95 10.58 L6.63 10.60 L7.31 10.52 L7.98 10.33 L8.62 10.04 L9.22 9.64 L9.76 9.15 L10.22 8.58 L10.59 7.93 L10.87 7.23 L11.03 6.48 L11.08 5.71 L11.01 4.92 L10.82 4.15 L10.51 3.41 L10.08 2.71 L9.55 2.08 L8.91 1.54" fill="none" stroke="#c0c0c0" stroke-width="1.1"/></svg>
<div style="left:591px;top:811.2px;width:89.2px;height:13.8px;background:#222222;"></div>
<span class="t" style="left:598.4px;top:812.99px;font-size:11px;line-height:11px;color:#c0c0c0;font-weight:400;letter-spacing:-0.133px;">None</span>
<svg style="position:absolute;left:667.7px;top:816px;" width="8" height="5" viewBox="0 0 8 5"><path d="M0.5 0.5 L4 4 L7.5 0.5" fill="none" stroke="#c0c0c0" stroke-width="1.1"/></svg>
<div style="left:2px;top:827px;width:698px;height:16px;background:#2d2d2d;"></div>
<div style="left:2px;top:843px;width:698px;height:1px;background:#262626;"></div>
<div style="left:6px;top:828.2px;width:12.8px;height:12.5px;background:#222222;"></div>
<div style="left:36.2px;top:828.2px;width:12.8px;height:12.5px;background:#222222;"></div>
<div style="left:51px;top:828.2px;width:13px;height:12.5px;background:#222222;"></div>
<svg style="position:absolute;left:7.2px;top:830.8px;" width="11.2" height="7.5" viewBox="0 0 11.2 7.5"><path d="M0.5 3.75 C3 0 8.2 0 10.7 3.75 C8.2 7.5 3 7.5 0.5 3.75 Z" fill="#c8c8c8"/><circle cx="5.6" cy="3.75" r="1.6" fill="#222222"/></svg>
<svg style="position:absolute;left:75.5px;top:832px;" width="5" height="8" viewBox="0 0 5 8"><path d="M0.8 0.8 L4 4 L0.8 7.2" fill="none" stroke="#a0a0a0" stroke-width="1"/></svg>
<div style="left:87px;top:829px;width:12px;height:12px;background:#b09d7b;"></div>
<span class="t" style="left:108.4px;top:829.29px;font-size:11px;line-height:11px;color:#a5a5a5;font-weight:400;">4</span>
<svg style="position:absolute;left:136px;top:828.5px;" width="17" height="13.5" viewBox="0 0 17 13.5"><rect x="0.3" y="0.3" width="16.2" height="13" rx="0.8" fill="#c4c4c4"/><ellipse cx="1.7" cy="2.2" rx="0.7" ry="1" fill="#111"/><ellipse cx="14.9" cy="2.2" rx="0.7" ry="1" fill="#111"/><ellipse cx="1.7" cy="5.5" rx="0.7" ry="1" fill="#111"/><ellipse cx="14.9" cy="5.5" rx="0.7" ry="1" fill="#111"/><ellipse cx="1.7" cy="8.8" rx="0.7" ry="1" fill="#111"/><ellipse cx="14.9" cy="8.8" rx="0.7" ry="1" fill="#111"/><ellipse cx="1.7" cy="12.099999999999998" rx="0.7" ry="1" fill="#111"/><ellipse cx="14.9" cy="12.099999999999998" rx="0.7" ry="1" fill="#111"/><rect x="3.5" y="11.3" width="9.6" height="0.9" fill="#222"/><path d="M7.5 5 L12.2 4.2 L12.2 9.5 L9 9.5 Z" fill="#f03a3a" stroke="#222" stroke-width="0.5"/><path d="M4.8 10 L7.8 5.8 L10.8 10 Z" fill="#16a820" stroke="#222" stroke-width="0.5"/><circle cx="6" cy="5" r="2.3" fill="#2f8cf0" stroke="#222" stroke-width="0.5"/></svg>
<span class="t" style="left:157.2px;top:830.19px;font-size:11px;line-height:11px;color:#a5a5a5;font-weight:400;letter-spacing:0.292px;">[Sparks mix shape]</span>
<div style="left:269.2px;top:828.2px;width:12.6px;height:12.5px;background:#222222;"></div>
<svg style="position:absolute;left:269.5px;top:829.2px;" width="13" height="11" viewBox="0 0 13 11"><path d="M1.8 6.3 A4.7 4.9 0 0 1 11.2 6.3 Z" fill="#c0c0c0"/><circle cx="4.6" cy="3.6" r="1" fill="#222222"/><circle cx="8.4" cy="3.6" r="1" fill="#222222"/><path d="M0 7.6 H5 M8 7.6 H13" stroke="#c0c0c0" stroke-width="1.2"/><path d="M6.5 6 V10.5" stroke="#c0c0c0" stroke-width="1.6"/></svg>
<div style="left:284px;top:828.2px;width:12.8px;height:12.5px;background:#222222;"></div>
<div style="left:299px;top:828.2px;width:12.8px;height:12.5px;background:#222222;"></div>
<svg style="position:absolute;left:300px;top:829px;" width="11" height="11" viewBox="0 0 11 11"><path d="M1 10.5 L10.5 1" stroke="#c8c8c8" stroke-width="1.2"/></svg>
<div style="left:344px;top:828.2px;width:12.8px;height:12.5px;background:#222222;"></div>
<div style="left:359.2px;top:828.2px;width:12.8px;height:12.5px;background:#222222;"></div>
<div style="left:374px;top:828.2px;width:13px;height:12.5px;background:#222222;"></div>
<div style="left:405px;top:828.2px;width:69px;height:13.8px;background:#222222;"></div>
<span class="t" style="left:412.3px;top:829.99px;font-size:11px;line-height:11px;color:#c0c0c0;font-weight:400;letter-spacing:0.370px;">Normal</span>
<svg style="position:absolute;left:461.8px;top:833px;" width="8" height="5" viewBox="0 0 8 5"><path d="M0.5 0.5 L4 4 L7.5 0.5" fill="none" stroke="#c0c0c0" stroke-width="1.1"/></svg>
<div style="left:479px;top:828.2px;width:13px;height:13.8px;background:#222222;"></div>
<div style="left:497.8px;top:828.2px;width:65.4px;height:13.8px;background:#222222;"></div>
<span class="t" style="left:505.3px;top:829.99px;font-size:11px;line-height:11px;color:#c0c0c0;font-weight:400;letter-spacing:-0.133px;">None</span>
<svg style="position:absolute;left:551px;top:833px;" width="8" height="5" viewBox="0 0 8 5"><path d="M0.5 0.5 L4 4 L7.5 0.5" fill="none" stroke="#c0c0c0" stroke-width="1.1"/></svg>
<svg style="position:absolute;left:571.7px;top:828.3px;" width="13" height="13" viewBox="0 0 13 13"><path d="M5.13 5.98 L5.04 6.11 L4.97 6.26 L4.93 6.43 L4.91 6.62 L4.93 6.81 L4.99 7.00 L5.08 7.20 L5.20 7.38 L5.36 7.55 L5.56 7.69 L5.78 7.81 L6.03 7.89 L6.29 7.93 L6.57 7.93 L6.86 7.88 L7.14 7.78 L7.42 7.64 L7.67 7.44 L7.90 7.20 L8.09 6.93 L8.24 6.61 L8.34 6.27 L8.39 5.90 L8.38 5.52 L8.31 5.14 L8.18 4.77 L7.99 4.41 L7.73 4.08 L7.42 3.78 L7.06 3.53 L6.66 3.34 L6.22 3.21 L5.76 3.14 L5.28 3.15 L4.80 3.23 L4.33 3.39 L3.88 3.63 L3.47 3.94 L3.10 4.31 L2.78 4.75 L2.54 5.24 L2.37 5.77 L2.28 6.33 L2.27 6.90 L2.36 7.48 L2.54 8.05 L2.81 8.60 L3.17 9.10 L3.60 9.55 L4.11 9.93 L4.68 10.24 L5.30 10.46 L5.95 10.58 L6.63 10.60 L7.31 10.52 L7.98 10.33 L8.62 10.04 L9.22 9.64 L9.76 9.15 L10.22 8.58 L10.59 7.93 L10.87 7.23 L11.03 6.48 L11.08 5.71 L11.01 4.92 L10.82 4.15 L10.51 3.41 L10.08 2.71 L9.55 2.08 L8.91 1.54" fill="none" stroke="#c0c0c0" stroke-width="1.1"/></svg>
<div style="left:591px;top:828.2px;width:89.2px;height:13.8px;background:#222222;"></div>
<span class="t" style="left:598.4px;top:829.99px;font-size:11px;line-height:11px;color:#c0c0c0;font-weight:400;letter-spacing:-0.133px;">None</span>
<svg style="position:absolute;left:667.7px;top:833px;" width="8" height="5" viewBox="0 0 8 5"><path d="M0.5 0.5 L4 4 L7.5 0.5" fill="none" stroke="#c0c0c0" stroke-width="1.1"/></svg>
<div style="left:2px;top:844px;width:698px;height:16px;background:#2d2d2d;"></div>
<div style="left:2px;top:860px;width:698px;height:1px;background:#262626;"></div>
<div style="left:6px;top:845.2px;width:12.8px;height:12.5px;background:#222222;"></div>
<div style="left:36.2px;top:845.2px;width:12.8px;height:12.5px;background:#222222;"></div>
<div style="left:51px;top:845.2px;width:13px;height:12.5px;background:#222222;"></div>
<svg style="position:absolute;left:7.2px;top:847.8px;" width="11.2" height="7.5" viewBox="0 0 11.2 7.5"><path d="M0.5 3.75 C3 0 8.2 0 10.7 3.75 C8.2 7.5 3 7.5 0.5 3.75 Z" fill="#c8c8c8"/><circle cx="5.6" cy="3.75" r="1.6" fill="#222222"/></svg>
<svg style="position:absolute;left:75.5px;top:849px;" width="5" height="8" viewBox="0 0 5 8"><path d="M0.8 0.8 L4 4 L0.8 7.2" fill="none" stroke="#a0a0a0" stroke-width="1"/></svg>
<div style="left:87px;top:846px;width:12px;height:12px;background:#b09d7b;"></div>
<span class="t" style="left:108.4px;top:846.29px;font-size:11px;line-height:11px;color:#a5a5a5;font-weight:400;">5</span>
<svg style="position:absolute;left:136px;top:845.5px;" width="17" height="13.5" viewBox="0 0 17 13.5"><rect x="0.3" y="0.3" width="16.2" height="13" rx="0.8" fill="#c4c4c4"/><ellipse cx="1.7" cy="2.2" rx="0.7" ry="1" fill="#111"/><ellipse cx="14.9" cy="2.2" rx="0.7" ry="1" fill="#111"/><ellipse cx="1.7" cy="5.5" rx="0.7" ry="1" fill="#111"/><ellipse cx="14.9" cy="5.5" rx="0.7" ry="1" fill="#111"/><ellipse cx="1.7" cy="8.8" rx="0.7" ry="1" fill="#111"/><ellipse cx="14.9" cy="8.8" rx="0.7" ry="1" fill="#111"/><ellipse cx="1.7" cy="12.099999999999998" rx="0.7" ry="1" fill="#111"/><ellipse cx="14.9" cy="12.099999999999998" rx="0.7" ry="1" fill="#111"/><rect x="3.5" y="11.3" width="9.6" height="0.9" fill="#222"/><path d="M7.5 5 L12.2 4.2 L12.2 9.5 L9 9.5 Z" fill="#f03a3a" stroke="#222" stroke-width="0.5"/><path d="M4.8 10 L7.8 5.8 L10.8 10 Z" fill="#16a820" stroke="#222" stroke-width="0.5"/><circle cx="6" cy="5" r="2.3" fill="#2f8cf0" stroke="#222" stroke-width="0.5"/></svg>
<span class="t" style="left:157.2px;top:847.19px;font-size:11px;line-height:11px;color:#a5a5a5;font-weight:400;letter-spacing:0.247px;">[Backgr...lements 2]</span>
<div style="left:269.2px;top:845.2px;width:12.6px;height:12.5px;background:#222222;"></div>
<svg style="position:absolute;left:269.5px;top:846.2px;" width="13" height="11" viewBox="0 0 13 11"><path d="M1.8 6.3 A4.7 4.9 0 0 1 11.2 6.3 Z" fill="#c0c0c0"/><circle cx="4.6" cy="3.6" r="1" fill="#222222"/><circle cx="8.4" cy="3.6" r="1" fill="#222222"/><path d="M0 7.6 H5 M8 7.6 H13" stroke="#c0c0c0" stroke-width="1.2"/><path d="M6.5 6 V10.5" stroke="#c0c0c0" stroke-width="1.6"/></svg>
<div style="left:284px;top:845.2px;width:12.8px;height:12.5px;background:#222222;"></div>
<div style="left:299px;top:845.2px;width:12.8px;height:12.5px;background:#222222;"></div>
<svg style="position:absolute;left:300px;top:846px;" width="11" height="11" viewBox="0 0 11 11"><path d="M1 10.5 L10.5 1" stroke="#c8c8c8" stroke-width="1.2"/></svg>
<div style="left:344px;top:845.2px;width:12.8px;height:12.5px;background:#222222;"></div>
<div style="left:359.2px;top:845.2px;width:12.8px;height:12.5px;background:#222222;"></div>
<div style="left:374px;top:845.2px;width:13px;height:12.5px;background:#222222;"></div>
<svg style="position:absolute;left:375.5px;top:846px;" width="11" height="11.5" viewBox="0 0 11 11.5"><path d="M5.5 0.8 L10.2 3.2 V8.3 L5.5 10.7 L0.8 8.3 V3.2 Z M0.8 3.2 L5.5 5.6 L10.2 3.2 M5.5 5.6 V10.7" fill="none" stroke="#b8b8b8" stroke-width="1.1"/></svg>
<div style="left:405px;top:845.2px;width:69px;height:13.8px;background:#222222;"></div>
<span class="t" style="left:412.3px;top:846.99px;font-size:11px;line-height:11px;color:#c0c0c0;font-weight:400;letter-spacing:0.370px;">Normal</span>
<svg style="position:absolute;left:461.8px;top:850px;" width="8" height="5" viewBox="0 0 8 5"><path d="M0.5 0.5 L4 4 L7.5 0.5" fill="none" stroke="#c0c0c0" stroke-width="1.1"/></svg>
<div style="left:479px;top:845.2px;width:13px;height:13.8px;background:#222222;"></div>
<div style="left:497.8px;top:845.2px;width:65.4px;height:13.8px;background:#222222;"></div>
<span class="t" style="left:505.3px;top:846.99px;font-size:11px;line-height:11px;color:#c0c0c0;font-weight:400;letter-spacing:-0.133px;">None</span>
<svg style="position:absolute;left:551px;top:850px;" width="8" height="5" viewBox="0 0 8 5"><path d="M0.5 0.5 L4 4 L7.5 0.5" fill="none" stroke="#c0c0c0" stroke-width="1.1"/></svg>
<svg style="position:absolute;left:571.7px;top:845.3px;" width="13" height="13" viewBox="0 0 13 13"><path d="M5.13 5.98 L5.04 6.11 L4.97 6.26 L4.93 6.43 L4.91 6.62 L4.93 6.81 L4.99 7.00 L5.08 7.20 L5.20 7.38 L5.36 7.55 L5.56 7.69 L5.78 7.81 L6.03 7.89 L6.29 7.93 L6.57 7.93 L6.86 7.88 L7.14 7.78 L7.42 7.64 L7.67 7.44 L7.90 7.20 L8.09 6.93 L8.24 6.61 L8.34 6.27 L8.39 5.90 L8.38 5.52 L8.31 5.14 L8.18 4.77 L7.99 4.41 L7.73 4.08 L7.42 3.78 L7.06 3.53 L6.66 3.34 L6.22 3.21 L5.76 3.14 L5.28 3.15 L4.80 3.23 L4.33 3.39 L3.88 3.63 L3.47 3.94 L3.10 4.31 L2.78 4.75 L2.54 5.24 L2.37 5.77 L2.28 6.33 L2.27 6.90 L2.36 7.48 L2.54 8.05 L2.81 8.60 L3.17 9.10 L3.60 9.55 L4.11 9.93 L4.68 10.24 L5.30 10.46 L5.95 10.58 L6.63 10.60 L7.31 10.52 L7.98 10.33 L8.62 10.04 L9.22 9.64 L9.76 9.15 L10.22 8.58 L10.59 7.93 L10.87 7.23 L11.03 6.48 L11.08 5.71 L11.01 4.92 L10.82 4.15 L10.51 3.41 L10.08 2.71 L9.55 2.08 L8.91 1.54" fill="none" stroke="#c0c0c0" stroke-width="1.1"/></svg>
<div style="left:591px;top:845.2px;width:89.2px;height:13.8px;background:#222222;"></div>
<span class="t" style="left:598.4px;top:846.99px;font-size:11px;line-height:11px;color:#c0c0c0;font-weight:400;letter-spacing:-0.133px;">None</span>
<svg style="position:absolute;left:667.7px;top:850px;" width="8" height="5" viewBox="0 0 8 5"><path d="M0.5 0.5 L4 4 L7.5 0.5" fill="none" stroke="#c0c0c0" stroke-width="1.1"/></svg>
<div style="left:2px;top:861px;width:698px;height:16px;background:#2d2d2d;"></div>
<div style="left:2px;top:877px;width:698px;height:1px;background:#262626;"></div>
<div style="left:6px;top:862.2px;width:12.8px;height:12.5px;background:#222222;"></div>
<div style="left:36.2px;top:862.2px;width:12.8px;height:12.5px;background:#222222;"></div>
<div style="left:51px;top:862.2px;width:13px;height:12.5px;background:#222222;"></div>
<svg style="position:absolute;left:7.2px;top:864.8px;" width="11.2" height="7.5" viewBox="0 0 11.2 7.5"><path d="M0.5 3.75 C3 0 8.2 0 10.7 3.75 C8.2 7.5 3 7.5 0.5 3.75 Z" fill="#c8c8c8"/><circle cx="5.6" cy="3.75" r="1.6" fill="#222222"/></svg>
<svg style="position:absolute;left:75.5px;top:866px;" width="5" height="8" viewBox="0 0 5 8"><path d="M0.8 0.8 L4 4 L0.8 7.2" fill="none" stroke="#a0a0a0" stroke-width="1"/></svg>
<div style="left:87px;top:863px;width:12px;height:12px;background:#c43c3c;"></div>
<span class="t" style="left:108.4px;top:863.29px;font-size:11px;line-height:11px;color:#a5a5a5;font-weight:400;">6</span>
<div style="left:137.5px;top:862.5px;width:13px;height:13px;background:#ffffff;border:1px solid #111;"></div>
<span class="t" style="left:157.2px;top:864.19px;font-size:11px;line-height:11px;color:#a5a5a5;font-weight:400;letter-spacing:0.406px;">[White Solid 1]</span>
<div style="left:269.2px;top:862.2px;width:12.6px;height:12.5px;background:#222222;"></div>
<svg style="position:absolute;left:269.5px;top:863.2px;" width="13" height="11" viewBox="0 0 13 11"><path d="M1.8 6.3 A4.7 4.9 0 0 1 11.2 6.3 Z" fill="#c0c0c0"/><circle cx="4.6" cy="3.6" r="1" fill="#222222"/><circle cx="8.4" cy="3.6" r="1" fill="#222222"/><path d="M0 7.6 H5 M8 7.6 H13" stroke="#c0c0c0" stroke-width="1.2"/><path d="M6.5 6 V10.5" stroke="#c0c0c0" stroke-width="1.6"/></svg>
<div style="left:284px;top:862.2px;width:12.8px;height:12.5px;background:#222222;"></div>
<div style="left:299px;top:862.2px;width:12.8px;height:12.5px;background:#222222;"></div>
<svg style="position:absolute;left:300px;top:863px;" width="11" height="11" viewBox="0 0 11 11"><path d="M1 10.5 L10.5 1" stroke="#c8c8c8" stroke-width="1.2"/></svg>
<div style="left:344px;top:862.2px;width:12.8px;height:12.5px;background:#222222;"></div>
<div style="left:359.2px;top:862.2px;width:12.8px;height:12.5px;background:#222222;"></div>
<div style="left:374px;top:862.2px;width:13px;height:12.5px;background:#222222;"></div>
<div style="left:405px;top:862.2px;width:69px;height:13.8px;background:#222222;"></div>
<span class="t" style="left:412.3px;top:863.99px;font-size:11px;line-height:11px;color:#c0c0c0;font-weight:400;letter-spacing:0.370px;">Normal</span>
<svg style="position:absolute;left:461.8px;top:867px;" width="8" height="5" viewBox="0 0 8 5"><path d="M0.5 0.5 L4 4 L7.5 0.5" fill="none" stroke="#c0c0c0" stroke-width="1.1"/></svg>
<div style="left:479px;top:862.2px;width:13px;height:13.8px;background:#222222;"></div>
<div style="left:497.8px;top:862.2px;width:65.4px;height:13.8px;background:#222222;"></div>
<span class="t" style="left:505.3px;top:863.99px;font-size:11px;line-height:11px;color:#c0c0c0;font-weight:400;letter-spacing:-0.133px;">None</span>
<svg style="position:absolute;left:551px;top:867px;" width="8" height="5" viewBox="0 0 8 5"><path d="M0.5 0.5 L4 4 L7.5 0.5" fill="none" stroke="#c0c0c0" stroke-width="1.1"/></svg>
<svg style="position:absolute;left:571.7px;top:862.3px;" width="13" height="13" viewBox="0 0 13 13"><path d="M5.13 5.98 L5.04 6.11 L4.97 6.26 L4.93 6.43 L4.91 6.62 L4.93 6.81 L4.99 7.00 L5.08 7.20 L5.20 7.38 L5.36 7.55 L5.56 7.69 L5.78 7.81 L6.03 7.89 L6.29 7.93 L6.57 7.93 L6.86 7.88 L7.14 7.78 L7.42 7.64 L7.67 7.44 L7.90 7.20 L8.09 6.93 L8.24 6.61 L8.34 6.27 L8.39 5.90 L8.38 5.52 L8.31 5.14 L8.18 4.77 L7.99 4.41 L7.73 4.08 L7.42 3.78 L7.06 3.53 L6.66 3.34 L6.22 3.21 L5.76 3.14 L5.28 3.15 L4.80 3.23 L4.33 3.39 L3.88 3.63 L3.47 3.94 L3.10 4.31 L2.78 4.75 L2.54 5.24 L2.37 5.77 L2.28 6.33 L2.27 6.90 L2.36 7.48 L2.54 8.05 L2.81 8.60 L3.17 9.10 L3.60 9.55 L4.11 9.93 L4.68 10.24 L5.30 10.46 L5.95 10.58 L6.63 10.60 L7.31 10.52 L7.98 10.33 L8.62 10.04 L9.22 9.64 L9.76 9.15 L10.22 8.58 L10.59 7.93 L10.87 7.23 L11.03 6.48 L11.08 5.71 L11.01 4.92 L10.82 4.15 L10.51 3.41 L10.08 2.71 L9.55 2.08 L8.91 1.54" fill="none" stroke="#c0c0c0" stroke-width="1.1"/></svg>
<div style="left:591px;top:862.2px;width:89.2px;height:13.8px;background:#222222;"></div>
<span class="t" style="left:598.4px;top:863.99px;font-size:11px;line-height:11px;color:#c0c0c0;font-weight:400;letter-spacing:-0.133px;">None</span>
<svg style="position:absolute;left:667.7px;top:867px;" width="8" height="5" viewBox="0 0 8 5"><path d="M0.5 0.5 L4 4 L7.5 0.5" fill="none" stroke="#c0c0c0" stroke-width="1.1"/></svg>
<div style="left:700px;top:726px;width:1.2px;height:294px;background:#0a0a0a;"></div>
<div style="left:701.2px;top:726px;width:1200px;height:1.2px;background:#0c0c0c;"></div>
<div style="left:707.5px;top:727.2px;width:1186.5px;height:7.8px;background:#6a6a6a;"></div>
<div style="left:707px;top:727.2px;width:1px;height:7.8px;background:#0c0c0c;"></div>
<svg style="position:absolute;left:701.5px;top:727.2px;" width="5.5" height="8" viewBox="0 0 5.5 8"><path d="M5.5 0 V8 H4.5 A4.5 4.5 0 0 1 0 3.5 V3 A3 3 0 0 1 3 0 Z" fill="#3a8ee6"/></svg>
<svg style="position:absolute;left:1894px;top:726.5px;" width="7" height="9" viewBox="0 0 7 9"><path d="M0 0 V9 H1 A6 5 0 0 0 7 4.5 A6 5 0 0 0 1 0 Z" fill="#3a8ee6"/></svg>
<div style="left:902px;top:727.2px;width:1.2px;height:7.8px;background:#5a88c0;"></div>
<div style="left:708.0px;top:748px;width:1px;height:6.5px;background:#a0a0a0;"></div>
<div style="left:806.9px;top:750px;width:1px;height:4.5px;background:#a0a0a0;"></div>
<div style="left:905.8px;top:750px;width:1px;height:4.5px;background:#a0a0a0;"></div>
<div style="left:1004.7px;top:750px;width:1px;height:4.5px;background:#a0a0a0;"></div>
<div style="left:1103.6px;top:750px;width:1px;height:4.5px;background:#a0a0a0;"></div>
<div style="left:1202.5px;top:750px;width:1px;height:4.5px;background:#a0a0a0;"></div>
<div style="left:1301.4px;top:750px;width:1px;height:4.5px;background:#a0a0a0;"></div>
<div style="left:1400.3000000000002px;top:750px;width:1px;height:4.5px;background:#a0a0a0;"></div>
<div style="left:1499.2px;top:750px;width:1px;height:4.5px;background:#a0a0a0;"></div>
<div style="left:1598.1px;top:750px;width:1px;height:4.5px;background:#a0a0a0;"></div>
<div style="left:1697.0px;top:750px;width:1px;height:4.5px;background:#a0a0a0;"></div>
<div style="left:1795.9px;top:750px;width:1px;height:4.5px;background:#a0a0a0;"></div>
<div style="left:1894.8000000000002px;top:748px;width:1px;height:6.5px;background:#a0a0a0;"></div>
<div style="left:701px;top:735px;width:1200px;height:20px;overflow:hidden;">
<span class="t" style="left:-3px;top:2.91px;font-size:10.5px;line-height:10.5px;color:#a8a8a8;font-weight:400;">0:00s</span>
<span class="t" style="left:95.69999999999993px;top:2.91px;font-size:10.5px;line-height:10.5px;color:#a8a8a8;font-weight:400;">05s</span>
<span class="t" style="left:194.5999999999999px;top:2.91px;font-size:10.5px;line-height:10.5px;color:#a8a8a8;font-weight:400;">10s</span>
<span class="t" style="left:293.5px;top:2.91px;font-size:10.5px;line-height:10.5px;color:#a8a8a8;font-weight:400;">15s</span>
<span class="t" style="left:392.4000000000001px;top:2.91px;font-size:10.5px;line-height:10.5px;color:#a8a8a8;font-weight:400;">20s</span>
<span class="t" style="left:491.29999999999995px;top:2.91px;font-size:10.5px;line-height:10.5px;color:#a8a8a8;font-weight:400;">25s</span>
<span class="t" style="left:590.2px;top:2.91px;font-size:10.5px;line-height:10.5px;color:#a8a8a8;font-weight:400;">30s</span>
<span class="t" style="left:689.0999999999999px;top:2.91px;font-size:10.5px;line-height:10.5px;color:#a8a8a8;font-weight:400;">35s</span>
<span class="t" style="left:788.0px;top:2.91px;font-size:10.5px;line-height:10.5px;color:#a8a8a8;font-weight:400;">40s</span>
<span class="t" style="left:886.9000000000001px;top:2.91px;font-size:10.5px;line-height:10.5px;color:#a8a8a8;font-weight:400;">45s</span>
<span class="t" style="left:985.8px;top:2.91px;font-size:10.5px;line-height:10.5px;color:#a8a8a8;font-weight:400;">50s</span>
<span class="t" style="left:1084.7px;top:2.91px;font-size:10.5px;line-height:10.5px;color:#a8a8a8;font-weight:400;">55s</span>
<span class="t" style="left:1175.6000000000001px;top:2.91px;font-size:10.5px;line-height:10.5px;color:#a8a8a8;font-weight:400;">01:00s</span>
</div>
<div style="left:701.2px;top:755px;width:1200px;height:1.3px;background:#0c0c0c;"></div>
<div style="left:707.5px;top:756.3px;width:1186.5px;height:14.5px;background:#666666;"></div>
<div style="left:707px;top:756.3px;width:1px;height:14.5px;background:#0c0c0c;"></div>
<svg style="position:absolute;left:701.8px;top:756.3px;" width="5.2" height="14.5" viewBox="0 0 5.2 14.5"><path d="M5.2 0 V14.5 H4.5 A4.5 4.5 0 0 1 0 10 V4.5 A4.5 4.5 0 0 1 4.5 0 Z" fill="#3a8ee6"/></svg>
<svg style="position:absolute;left:1894px;top:756.3px;" width="7" height="14.5" viewBox="0 0 7 14.5"><path d="M0 0 V14.5 H1 A6 7.25 0 0 0 7 7.25 A6 7.25 0 0 0 1 0 Z" fill="#3a8ee6"/></svg>
<div style="left:701.2px;top:770.8px;width:1200px;height:1.2px;background:#0c0c0c;"></div>
<div style="left:701.2px;top:772px;width:1200px;height:2.5px;background:#2a2a2a;"></div>
<div style="left:708px;top:772px;width:1.2px;height:3px;background:#22c33a;"></div>
<div style="left:896.7px;top:772px;width:1.2px;height:3px;background:#22c33a;"></div>
<div style="left:900.7px;top:772px;width:2px;height:3px;background:#22c33a;"></div>
<div style="left:976.7px;top:772px;width:1.2px;height:3px;background:#22c33a;"></div>
<div style="left:1022.7px;top:772px;width:1.2px;height:3px;background:#22c33a;"></div>
<div style="left:1244px;top:772px;width:1.2px;height:3px;background:#22c33a;"></div>
<div style="left:1252px;top:772px;width:1.2px;height:3px;background:#22c33a;"></div>
<svg style="position:absolute;left:1905px;top:758px;" width="11" height="14" viewBox="0 0 11 14"><path d="M0 0 H11 V9 L5.5 14 L0 9 Z" fill="#b8b8b8"/></svg>
<div style="left:701.2px;top:776px;width:1216.8px;height:244px;background:#232323;"></div>
<div style="left:701.2px;top:776px;width:6.5px;height:244px;background:#2a2a2a;"></div>
<div style="left:707.7px;top:776px;width:1193.3px;height:244px;background:#333333;"></div>
<div style="left:1894px;top:878px;width:7px;height:142px;background:#262626;"></div>
<div style="left:707.7px;top:776px;width:1193.3px;height:16px;background:#3a3a3a;"></div>
<div style="left:707.7px;top:792px;width:1193.3px;height:1px;background:#2a2a2a;"></div>
<div style="left:701.2px;top:792px;width:6.5px;height:1px;background:#222222;"></div>
<div style="left:707.7px;top:793px;width:1193.3px;height:16px;background:#3a3a3a;"></div>
<div style="left:707.7px;top:809px;width:1193.3px;height:1px;background:#2a2a2a;"></div>
<div style="left:701.2px;top:809px;width:6.5px;height:1px;background:#222222;"></div>
<div style="left:707.7px;top:810px;width:1193.3px;height:16px;background:#3a3a3a;"></div>
<div style="left:707.7px;top:826px;width:1193.3px;height:1px;background:#2a2a2a;"></div>
<div style="left:701.2px;top:826px;width:6.5px;height:1px;background:#222222;"></div>
<div style="left:707.7px;top:827px;width:1193.3px;height:16px;background:#3a3a3a;"></div>
<div style="left:707.7px;top:843px;width:1193.3px;height:1px;background:#2a2a2a;"></div>
<div style="left:701.2px;top:843px;width:6.5px;height:1px;background:#222222;"></div>
<div style="left:707.7px;top:844px;width:1193.3px;height:16px;background:#3a3a3a;"></div>
<div style="left:707.7px;top:860px;width:1193.3px;height:1px;background:#2a2a2a;"></div>
<div style="left:701.2px;top:860px;width:6.5px;height:1px;background:#222222;"></div>
<div style="left:707.7px;top:861px;width:1193.3px;height:16px;background:#3a3a3a;"></div>
<div style="left:707.7px;top:877px;width:1193.3px;height:1px;background:#2a2a2a;"></div>
<div style="left:701.2px;top:877px;width:6.5px;height:1px;background:#222222;"></div>
<div style="left:1894px;top:776px;width:7px;height:16px;background:#2f2f2f;"></div>
<div style="left:1894px;top:793px;width:7px;height:16px;background:#2f2f2f;"></div>
<div style="left:1894px;top:810px;width:7px;height:16px;background:#2f2f2f;"></div>
<div style="left:1894px;top:827px;width:7px;height:16px;background:#2f2f2f;"></div>
<div style="left:1894px;top:844px;width:7px;height:16px;background:#2f2f2f;"></div>
<div style="left:1894px;top:861px;width:7px;height:16px;background:#2f2f2f;"></div>
<div style="left:707.7px;top:776px;width:1186.3px;height:16px;background:#525c8e;"></div>
<div style="left:707.7px;top:793px;width:1186.3px;height:16px;background:#525c8e;"></div>
<div style="left:734px;top:810px;width:1167.2px;height:16px;background:#726a5a;"></div>
<div style="left:734px;top:810px;width:1167.2px;height:16px;background:transparent;border:1px solid #7d7462;border-bottom:none;border-right:none;"></div>
<svg style="position:absolute;left:735px;top:811px;" width="7" height="7" viewBox="0 0 7 7"><path d="M0 0 H7 A7 7 0 0 0 0 7 Z" fill="#39342c"/></svg>
<div style="left:733.3px;top:827px;width:21.0px;height:16px;background:#726a5a;"></div>
<div style="left:733.3px;top:827px;width:21.0px;height:16px;background:transparent;border:1px solid #7d7462;border-bottom:none;"></div>
<svg style="position:absolute;left:734.3px;top:828px;" width="7" height="7" viewBox="0 0 7 7"><path d="M0 0 H7 A7 7 0 0 0 0 7 Z" fill="#39342c"/></svg>
<svg style="position:absolute;left:746.3px;top:828px;" width="7" height="7" viewBox="0 0 7 7"><path d="M7 0 H0 A7 7 0 0 1 7 7 Z" fill="#39342c"/></svg>
<div style="left:707.7px;top:844px;width:1186.3px;height:16px;background:#726a5a;"></div>
<div style="left:707.7px;top:844px;width:1186.3px;height:16px;background:transparent;border:1px solid #7d7462;border-bottom:none;border-right:none;"></div>
<svg style="position:absolute;left:708.7px;top:845px;" width="7" height="7" viewBox="0 0 7 7"><path d="M0 0 H7 A7 7 0 0 0 0 7 Z" fill="#39342c"/></svg>
<svg style="position:absolute;left:1886px;top:845px;" width="7" height="7" viewBox="0 0 7 7"><path d="M7 0 H0 A7 7 0 0 1 7 7 Z" fill="#39342c"/></svg>
<div style="left:707.7px;top:861px;width:1186.3px;height:16px;background:#763a3b;"></div>
<div style="left:1901.2px;top:776px;width:16.8px;height:244px;background:#232323;"></div>
<svg style="position:absolute;left:1903px;top:779px;" width="15" height="13" viewBox="0 0 15 13"><path d="M1 7 L6 1.5 L7.5 4 H14 V9.5 H7" fill="#b8b8b8"/><circle cx="6" cy="9" r="2.8" fill="#232323" stroke="#b8b8b8" stroke-width="1.3"/></svg>
<div style="left:1918px;top:693px;width:2px;height:342px;background:#1a1a1a;"></div>
<svg style="position:absolute;left:896.5px;top:740px;" width="12" height="15" viewBox="0 0 12 15"><path d="M0.5 0.5 H11.5 V8 L6 14.5 L0.5 8 Z" fill="#3a8ee6"/><path d="M4.5 7 H7.5 M6 7 V14" stroke="#1c3f6a" stroke-width="1"/></svg>
<div style="left:902px;top:752px;width:1.2px;height:268px;background:#3a8ee6;"></div>
<div style="left:2px;top:1020px;width:806px;height:1.5px;background:#080808;"></div>
<div style="left:2px;top:1021.5px;width:1916px;height:13.5px;background:#232323;"></div>
<svg style="position:absolute;left:8px;top:1022px;" width="12" height="13" viewBox="0 0 12 13"><rect x="0.5" y="0.5" width="7" height="7" fill="none" stroke="#3a8ee6" stroke-width="1.1"/><rect x="2.5" y="2.5" width="7" height="7" fill="#232323" stroke="#3a8ee6" stroke-width="1.1"/><rect x="4.5" y="4.5" width="7" height="8" fill="#232323" stroke="#3a8ee6" stroke-width="1.1"/><circle cx="8" cy="9" r="1" fill="#3a8ee6"/></svg>
<svg style="position:absolute;left:26px;top:1024px;" width="12" height="11" viewBox="0 0 12 11"><circle cx="4.5" cy="4.5" r="4" fill="none" stroke="#3a8ee6" stroke-width="1.1"/><rect x="5.5" y="5.5" width="6" height="6" fill="#3a8ee6"/></svg>
<svg style="position:absolute;left:44px;top:1024px;" width="12" height="11" viewBox="0 0 12 11"><path d="M3 0 H8 V3 L11 5.5 L8 8 V11 H3 V8 L0 5.5 L3 3 Z" fill="#8a8a8a"/></svg>
<div style="left:5px;top:1022px;width:17px;height:13px;background:transparent;border:1px solid #2c2c2c;"></div>
<div style="left:23px;top:1022px;width:17px;height:13px;background:transparent;border:1px solid #2c2c2c;"></div>
<svg style="position:absolute;left:706px;top:1027px;" width="10.5" height="5" viewBox="0 0 10.5 5"><path d="M0 5 L3.5 1.5 L5 3 L7.5 0 L10.5 5 Z" fill="#b8b8b8"/></svg>
<div style="left:735px;top:1028.5px;width:40px;height:1.5px;background:#444444;"></div>
<svg style="position:absolute;left:726.5px;top:1024.5px;" width="11" height="11" viewBox="0 0 11 11"><circle cx="5.5" cy="5.5" r="4.3" fill="none" stroke="#a0a0a0" stroke-width="1.8"/></svg>
<svg style="position:absolute;left:787px;top:1024px;" width="16.5" height="8" viewBox="0 0 16.5 8"><path d="M0 8 L4 2.5 L5.5 4.5 L3 8 Z M5 8 L10 0.5 L16.5 8 Z" fill="#b8b8b8"/></svg>
</body></html>
